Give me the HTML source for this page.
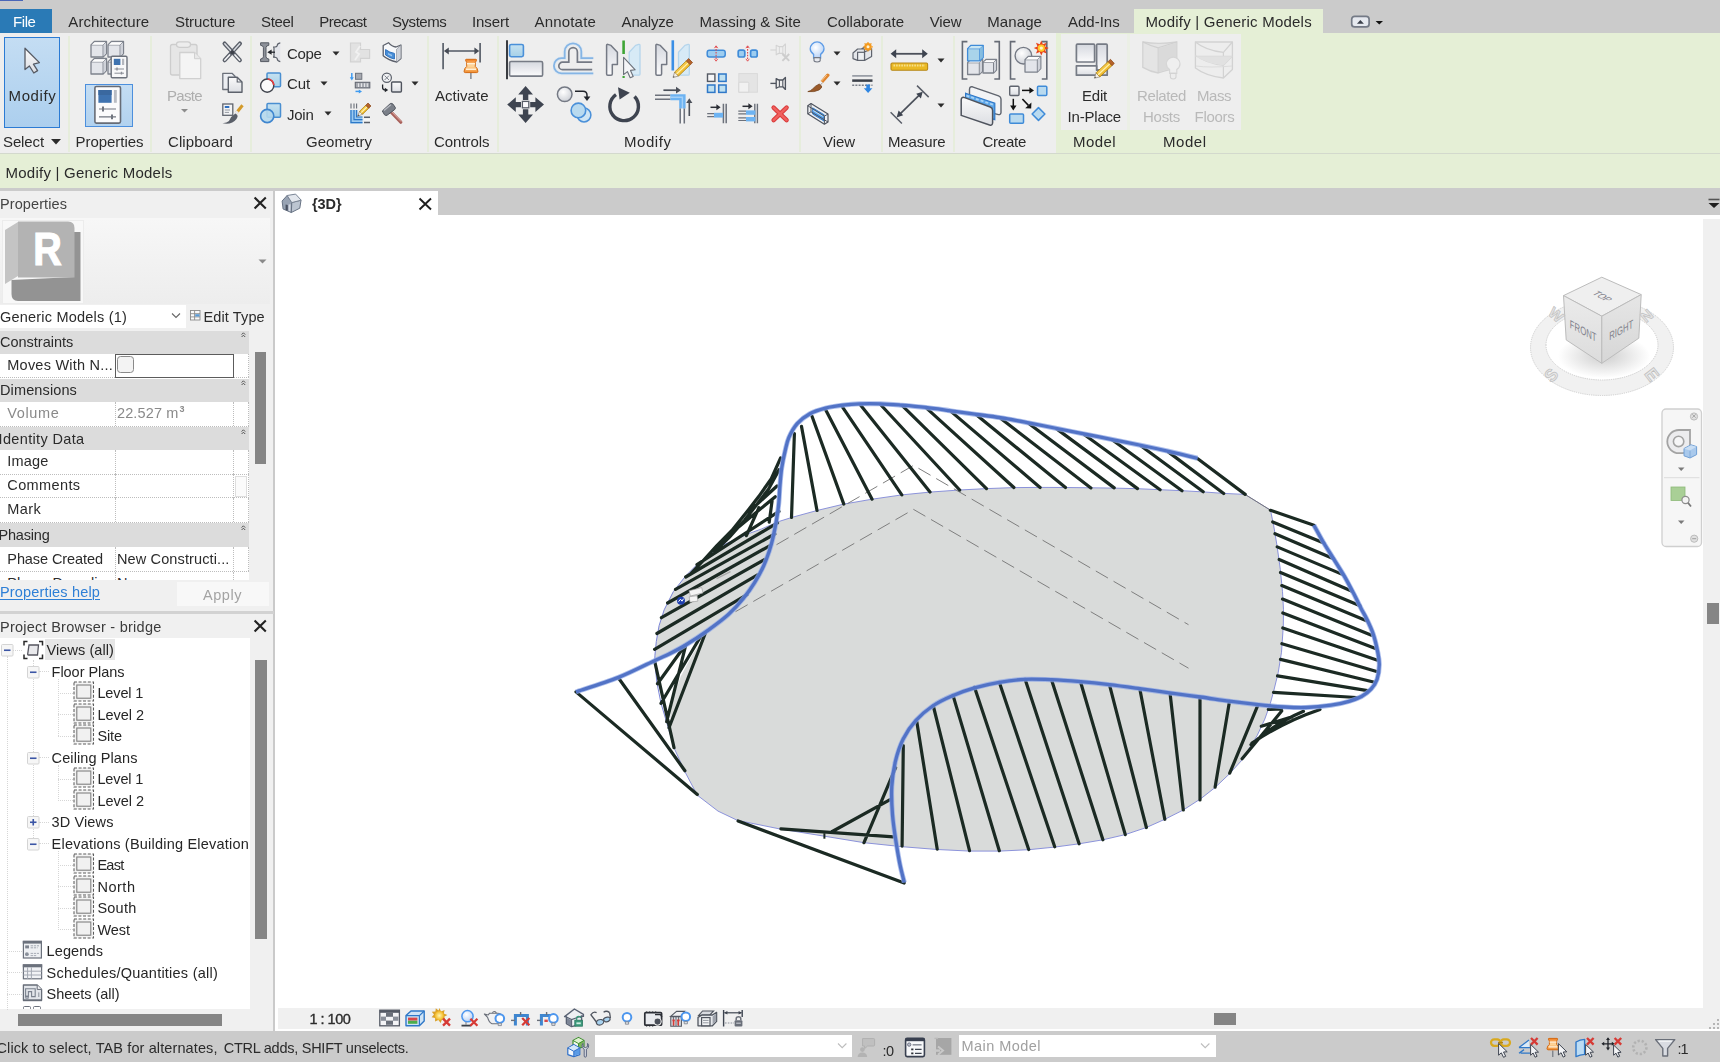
<!DOCTYPE html>
<html lang="en"><head><meta charset="utf-8"><title>Revit - bridge - 3D View: {3D}</title>
<style>
html,body{margin:0;padding:0;}
body{width:1720px;height:1062px;overflow:hidden;position:relative;background:#fff;
 font-family:"Liberation Sans",sans-serif;}
#app{position:absolute;left:0;top:0;width:1720px;height:1062px;overflow:hidden;}
#app div,#app span,#app svg{position:absolute;}
#app span{white-space:nowrap;line-height:20px;height:20px;}
#app span.g{filter:grayscale(1);}
#app span.c{filter:contrast(1);}
</style></head><body><div id="app">
<div style="left:0px;top:0px;width:1720px;height:33.4px;background:#cbcbcb;"></div>
<div style="left:0px;top:0px;width:23px;height:1px;background:#4a66b8;"></div>
<div style="left:0px;top:8.6px;width:52.4px;height:24.8px;background:#2a7ab6;"></div>
<span class="g" style="left:13.00px;top:12.10px;font-size:15px;color:#ffffff;letter-spacing:-0.418px;">File</span>
<div style="left:1133.6px;top:8.7px;width:189.4px;height:24.7px;background:#e5efd6;"></div>
<span class="g" style="left:68.30px;top:12.10px;font-size:15px;color:#2b2b2b;letter-spacing:0.080px;">Architecture</span>
<span class="g" style="left:175.00px;top:12.10px;font-size:15px;color:#2b2b2b;letter-spacing:-0.073px;">Structure</span>
<span class="g" style="left:261.00px;top:12.10px;font-size:15px;color:#2b2b2b;letter-spacing:-0.338px;">Steel</span>
<span class="g" style="left:319.30px;top:12.10px;font-size:15px;color:#2b2b2b;letter-spacing:-0.522px;">Precast</span>
<span class="g" style="left:392.00px;top:12.10px;font-size:15px;color:#2b2b2b;letter-spacing:-0.459px;">Systems</span>
<span class="g" style="left:472.00px;top:12.10px;font-size:15px;color:#2b2b2b;letter-spacing:-0.086px;">Insert</span>
<span class="g" style="left:534.50px;top:12.10px;font-size:15px;color:#2b2b2b;letter-spacing:0.181px;">Annotate</span>
<span class="g" style="left:621.60px;top:12.10px;font-size:15px;color:#2b2b2b;letter-spacing:-0.167px;">Analyze</span>
<span class="g" style="left:699.50px;top:12.10px;font-size:15px;color:#2b2b2b;letter-spacing:0.104px;">Massing &amp; Site</span>
<span class="g" style="left:827.00px;top:12.10px;font-size:15px;color:#2b2b2b;letter-spacing:0.026px;">Collaborate</span>
<span class="g" style="left:929.70px;top:12.10px;font-size:15px;color:#2b2b2b;letter-spacing:-0.086px;">View</span>
<span class="g" style="left:987.30px;top:12.10px;font-size:15px;color:#2b2b2b;letter-spacing:0.082px;">Manage</span>
<span class="g" style="left:1067.90px;top:12.10px;font-size:15px;color:#2b2b2b;letter-spacing:0.015px;">Add-Ins</span>
<span class="g" style="left:1145.40px;top:12.10px;font-size:15px;color:#2b2b2b;letter-spacing:0.219px;">Modify | Generic Models</span>
<svg style="left:1350px;top:15px" width="36" height="14" viewBox="0 0 36 14"><rect x="1.7" y="1.3" width="17.4" height="10.6" rx="3" fill="#e6e9ef" stroke="#747a86" stroke-width="1.7"/><path d="M6.9 8.8 L10.4 4.9 L13.9 8.8Z" fill="#3a3f4a"/><path d="M25.6 6 L33 6 L29.3 9.6Z" fill="#111"/></svg>
<div style="left:0px;top:33.4px;width:1720px;height:120.6px;background:#eeeeee;"></div>
<div style="left:1056px;top:33.4px;width:664px;height:120.6px;background:#e5efd6;"></div>
<div style="left:1061px;top:34px;width:180px;height:96px;background:#ebefe5;"></div>
<div style="left:1061px;top:34px;width:65.5px;height:96px;background:#eeeeee;"></div>
<div style="left:1130px;top:34px;width:111px;height:96px;background:#eeeeee;"></div>
<div style="left:67.5px;top:36px;width:2px;height:116px;background:#e6eddc;"></div>
<div style="left:149.5px;top:36px;width:2px;height:116px;background:#e6eddc;"></div>
<div style="left:249.5px;top:36px;width:2px;height:116px;background:#e6eddc;"></div>
<div style="left:426.5px;top:36px;width:2px;height:116px;background:#e6eddc;"></div>
<div style="left:496.5px;top:36px;width:2px;height:116px;background:#e6eddc;"></div>
<div style="left:798.5px;top:36px;width:2px;height:116px;background:#e6eddc;"></div>
<div style="left:880.5px;top:36px;width:2px;height:116px;background:#e6eddc;"></div>
<div style="left:952.5px;top:36px;width:2px;height:116px;background:#e6eddc;"></div>
<div style="left:0px;top:153px;width:1720px;height:1px;background:#d3d9cd;"></div>
<div style="left:0px;top:154px;width:1720px;height:34px;background:#e5efd6;"></div>
<span class="g" style="left:5.50px;top:162.70px;font-size:15px;color:#2b2b2b;letter-spacing:0.241px;">Modify | Generic Models</span>
<div style="left:0px;top:188px;width:1720px;height:27.3px;background:#cbcbcb;"></div>
<div style="left:4px;top:37px;width:56px;height:91px;background:linear-gradient(#c4ddf3,#accfee);border:1.5px solid #2b7bd4;box-sizing:border-box;"></div>
<span class="g" style="left:8.50px;top:86.40px;font-size:15px;color:#2b2b2b;letter-spacing:0.637px;">Modify</span>
<div style="left:85px;top:83.7px;width:48px;height:43.3px;background:linear-gradient(#c4ddf3,#b2d2ef);border:1.5px solid #4c8fdd;box-sizing:border-box;"></div>
<span class="g" style="left:3.00px;top:132.00px;font-size:15px;color:#2b2b2b;letter-spacing:-0.115px;">Select</span>
<svg style="left:50px;top:138px" width="12" height="8"><path d="M1 1 L11 1 L6 6.5Z" fill="#2b2b2b"/></svg>
<span class="g" style="left:75.50px;top:132.00px;font-size:15px;color:#2b2b2b;letter-spacing:-0.037px;">Properties</span>
<span class="g" style="left:168.00px;top:132.00px;font-size:15px;color:#2b2b2b;letter-spacing:0.088px;">Clipboard</span>
<span class="g" style="left:306.00px;top:132.00px;font-size:15px;color:#2b2b2b;letter-spacing:0.018px;">Geometry</span>
<span class="g" style="left:434.00px;top:132.00px;font-size:15px;color:#2b2b2b;letter-spacing:-0.045px;">Controls</span>
<span class="g" style="left:624.00px;top:132.00px;font-size:15px;color:#2b2b2b;letter-spacing:0.553px;">Modify</span>
<span class="g" style="left:823.00px;top:132.00px;font-size:15px;color:#2b2b2b;letter-spacing:-0.061px;">View</span>
<span class="g" style="left:888.00px;top:132.00px;font-size:15px;color:#2b2b2b;letter-spacing:-0.123px;">Measure</span>
<span class="g" style="left:982.50px;top:132.00px;font-size:15px;color:#2b2b2b;letter-spacing:-0.254px;">Create</span>
<span class="g" style="left:1073.00px;top:132.00px;font-size:15px;color:#2b2b2b;letter-spacing:0.429px;">Model</span>
<span class="g" style="left:1163.00px;top:132.00px;font-size:15px;color:#2b2b2b;letter-spacing:0.529px;">Model</span>
<span class="g" style="left:167.00px;top:86.40px;font-size:15px;color:#aeaeae;letter-spacing:-0.672px;">Paste</span>
<svg style="left:180px;top:108px" width="10" height="6"><path d="M1 1 L8 1 L4.5 4.5Z" fill="#8c8c8c"/></svg>
<span class="g" style="left:287.00px;top:44.10px;font-size:15px;color:#2b2b2b;letter-spacing:-0.315px;">Cope</span>
<span class="g" style="left:287.00px;top:74.40px;font-size:15px;color:#2b2b2b;letter-spacing:-0.114px;">Cut</span>
<span class="g" style="left:287.00px;top:104.60px;font-size:15px;color:#2b2b2b;letter-spacing:-0.254px;">Join</span>
<svg style="left:332px;top:51px" width="9" height="6"><path d="M0.5 0.5 L7.5 0.5 L4 4.5Z" fill="#2b2b2b"/></svg>
<svg style="left:320px;top:81px" width="9" height="6"><path d="M0.5 0.5 L7.5 0.5 L4 4.5Z" fill="#2b2b2b"/></svg>
<svg style="left:323.5px;top:111px" width="9" height="6"><path d="M0.5 0.5 L7.5 0.5 L4 4.5Z" fill="#2b2b2b"/></svg>
<svg style="left:411px;top:81px" width="9" height="6"><path d="M0.5 0.5 L7.5 0.5 L4 4.5Z" fill="#2b2b2b"/></svg>
<svg style="left:832.5px;top:50.5px" width="9" height="6"><path d="M0.5 0.5 L7.5 0.5 L4 4.5Z" fill="#2b2b2b"/></svg>
<svg style="left:832.5px;top:80.5px" width="9" height="6"><path d="M0.5 0.5 L7.5 0.5 L4 4.5Z" fill="#2b2b2b"/></svg>
<svg style="left:937px;top:57.5px" width="9" height="6"><path d="M0.5 0.5 L7.5 0.5 L4 4.5Z" fill="#2b2b2b"/></svg>
<svg style="left:937px;top:103px" width="9" height="6"><path d="M0.5 0.5 L7.5 0.5 L4 4.5Z" fill="#2b2b2b"/></svg>
<span class="g" style="left:435.00px;top:86.40px;font-size:15px;color:#2b2b2b;letter-spacing:0.018px;">Activate</span>
<span class="g" style="left:1082.00px;top:86.40px;font-size:15px;color:#2b2b2b;letter-spacing:-0.212px;">Edit</span>
<span class="g" style="left:1067.50px;top:107.30px;font-size:15px;color:#2b2b2b;letter-spacing:-0.191px;">In-Place</span>
<span class="g" style="left:1137.00px;top:86.40px;font-size:15px;color:#b9b9b9;letter-spacing:-0.386px;">Related</span>
<span class="g" style="left:1143.00px;top:107.30px;font-size:15px;color:#b9b9b9;letter-spacing:-0.269px;">Hosts</span>
<span class="g" style="left:1197.00px;top:86.40px;font-size:15px;color:#b9b9b9;letter-spacing:-0.460px;">Mass</span>
<span class="g" style="left:1194.50px;top:107.30px;font-size:15px;color:#b9b9b9;letter-spacing:-0.279px;">Floors</span>
<div style="left:0px;top:190.6px;width:273px;height:840.7px;background:#f0f0f0;"></div>
<div style="left:273px;top:190.6px;width:2.1px;height:840.7px;background:#cacaca;"></div>
<div style="left:275.1px;top:190.6px;width:2.6px;height:840.7px;background:#ffffff;"></div>
<span class="g" style="left:0.00px;top:194.38px;font-size:14.5px;color:#444;letter-spacing:0.091px;">Properties</span>
<svg style="left:253px;top:196px" width="15" height="14"><path d="M1.6 1.6 L12.8 12.4 M12.8 1.6 L1.6 12.4" stroke="#222" stroke-width="2.1" fill="none"/></svg>
<div style="left:0;top:217.5px;width:270px;height:86px;background:linear-gradient(#f7f7f7,#ededed);"></div>
<div style="left:1.5px;top:220px;width:82.5px;height:83.5px;background:#f8f8f8;border:1px solid #ececec;box-sizing:border-box;"></div>
<svg style="left:4px;top:220px" width="80" height="83" viewBox="0 0 80 83"><path d="M1 10 L14 2 L14 56 L1 64Z" fill="#c4c4c4"/><path d="M70 12 L76.5 12 L76.5 81 L14 81 Q7.5 81 7.5 74 L7.5 60 L70 57Z" fill="#939393"/><path d="M14 1.5 L64 1.5 Q70.5 1.5 70.5 8 L70.5 57.5 L14 57.5Z" fill="#b3b3b3"/><text x="0" y="0" transform="translate(29.2 45.2) scale(0.86 1)" font-family="Liberation Sans, sans-serif" font-weight="700" font-size="46" fill="#ffffff" stroke="#ffffff" stroke-width="1.2">R</text></svg>
<svg style="left:258px;top:259px" width="10" height="6"><path d="M0.5 0.5 L8.5 0.5 L4.5 4.5Z" fill="#8a8a8a"/></svg>
<div style="left:0px;top:304.5px;width:185.5px;height:23.5px;background:#ffffff;"></div>
<span class="g" style="left:0.00px;top:307.38px;font-size:14.5px;color:#2b2b2b;letter-spacing:0.206px;">Generic Models (1)</span>
<svg style="left:171px;top:312px" width="10" height="8"><path d="M1 1.5 L5 5.5 L9 1.5" stroke="#666" stroke-width="1.1" fill="none"/></svg>
<svg style="left:189.5px;top:309.5px" width="11" height="11"><rect x=".5" y=".5" width="9.5" height="9.5" fill="#fafafa" stroke="#8a8a8a" stroke-width=".9"/><path d="M.5 3.7 H10 M.5 6.9 H10 M4.6 .5 V10" stroke="#8a8a8a" stroke-width=".9"/><rect x="5.2" y="4.2" width="4.4" height="2.3" fill="#5b9bd5"/></svg>
<span class="g" style="left:203.50px;top:306.98px;font-size:14.5px;color:#2b2b2b;letter-spacing:0.123px;">Edit Type</span>
<div style="left:0px;top:330.5px;width:248.5px;height:249px;background:#ffffff;"></div>
<div style="left:0px;top:330.5px;width:248.5px;height:23px;background:#dcdcdc;"></div>
<span class="g" style="left:0.00px;top:332.48px;font-size:14.5px;color:#2b2b2b;letter-spacing:-0.003px;">Constraints</span>
<svg style="left:240.5px;top:332.0px" width="5" height="6"><path d="M.6 2.6 L2.4 .8 L4.2 2.6 M.6 5 L2.4 3.2 L4.2 5" stroke="#444" stroke-width=".9" fill="none"/></svg>
<div style="left:0px;top:378.5px;width:248.5px;height:23px;background:#dcdcdc;"></div>
<span class="g" style="left:0.00px;top:380.38px;font-size:14.5px;color:#2b2b2b;letter-spacing:0.125px;">Dimensions</span>
<svg style="left:240.5px;top:380.0px" width="5" height="6"><path d="M.6 2.6 L2.4 .8 L4.2 2.6 M.6 5 L2.4 3.2 L4.2 5" stroke="#444" stroke-width=".9" fill="none"/></svg>
<div style="left:0px;top:427.3px;width:248.5px;height:22.5px;background:#dcdcdc;"></div>
<span class="g" style="left:-1.50px;top:428.58px;font-size:14.5px;color:#2b2b2b;letter-spacing:0.353px;">Identity Data</span>
<svg style="left:240.5px;top:428.8px" width="5" height="6"><path d="M.6 2.6 L2.4 .8 L4.2 2.6 M.6 5 L2.4 3.2 L4.2 5" stroke="#444" stroke-width=".9" fill="none"/></svg>
<div style="left:0px;top:523px;width:248.5px;height:23.5px;background:#dcdcdc;"></div>
<span class="g" style="left:-1.50px;top:525.38px;font-size:14.5px;color:#2b2b2b;letter-spacing:-0.200px;">Phasing</span>
<svg style="left:240.5px;top:524.5px" width="5" height="6"><path d="M.6 2.6 L2.4 .8 L4.2 2.6 M.6 5 L2.4 3.2 L4.2 5" stroke="#444" stroke-width=".9" fill="none"/></svg>
<div style="left:0;top:376.9px;width:248.5px;height:0;border-top:1px dotted #bdbdbd;"></div>
<div style="left:115px;top:353.5px;width:0;height:23.899999999999977px;border-left:1px dotted #bdbdbd;"></div>
<div style="left:233px;top:353.5px;width:0;height:23.899999999999977px;border-left:1px dotted #bdbdbd;"></div>
<div style="left:247.5px;top:353.5px;width:0;height:23.899999999999977px;border-left:1px dotted #bdbdbd;"></div>
<div style="left:0;top:425.8px;width:248.5px;height:0;border-top:1px dotted #bdbdbd;"></div>
<div style="left:115px;top:401.5px;width:0;height:24.80000000000001px;border-left:1px dotted #bdbdbd;"></div>
<div style="left:233px;top:401.5px;width:0;height:24.80000000000001px;border-left:1px dotted #bdbdbd;"></div>
<div style="left:247.5px;top:401.5px;width:0;height:24.80000000000001px;border-left:1px dotted #bdbdbd;"></div>
<div style="left:0;top:473.5px;width:248.5px;height:0;border-top:1px dotted #bdbdbd;"></div>
<div style="left:115px;top:449.8px;width:0;height:24.19999999999999px;border-left:1px dotted #bdbdbd;"></div>
<div style="left:233px;top:449.8px;width:0;height:24.19999999999999px;border-left:1px dotted #bdbdbd;"></div>
<div style="left:247.5px;top:449.8px;width:0;height:24.19999999999999px;border-left:1px dotted #bdbdbd;"></div>
<div style="left:0;top:497.1px;width:248.5px;height:0;border-top:1px dotted #bdbdbd;"></div>
<div style="left:115px;top:474px;width:0;height:23.600000000000023px;border-left:1px dotted #bdbdbd;"></div>
<div style="left:233px;top:474px;width:0;height:23.600000000000023px;border-left:1px dotted #bdbdbd;"></div>
<div style="left:247.5px;top:474px;width:0;height:23.600000000000023px;border-left:1px dotted #bdbdbd;"></div>
<div style="left:0;top:521.5px;width:248.5px;height:0;border-top:1px dotted #bdbdbd;"></div>
<div style="left:115px;top:497.6px;width:0;height:24.399999999999977px;border-left:1px dotted #bdbdbd;"></div>
<div style="left:233px;top:497.6px;width:0;height:24.399999999999977px;border-left:1px dotted #bdbdbd;"></div>
<div style="left:247.5px;top:497.6px;width:0;height:24.399999999999977px;border-left:1px dotted #bdbdbd;"></div>
<div style="left:0;top:570.8px;width:248.5px;height:0;border-top:1px dotted #bdbdbd;"></div>
<div style="left:115px;top:546.5px;width:0;height:24.799999999999955px;border-left:1px dotted #bdbdbd;"></div>
<div style="left:233px;top:546.5px;width:0;height:24.799999999999955px;border-left:1px dotted #bdbdbd;"></div>
<div style="left:247.5px;top:546.5px;width:0;height:24.799999999999955px;border-left:1px dotted #bdbdbd;"></div>
<span class="g" style="left:7.30px;top:354.78px;font-size:14.5px;color:#2b2b2b;letter-spacing:0.225px;">Moves With N...</span>
<div style="left:115px;top:354px;width:118.5px;height:23.5px;background:#ffffff;border:1px solid #5c5c5c;box-sizing:border-box;"></div>
<div style="left:117px;top:356px;width:16.5px;height:16.5px;background:#f3f3f3;border:1.3px solid #8a8a8a;border-radius:3.5px;box-sizing:border-box;"></div>
<span class="g" style="left:7.30px;top:403.18px;font-size:14.5px;color:#8a8a8a;letter-spacing:0.639px;">Volume</span>
<span class="g" style="left:117.00px;top:403.18px;font-size:14.5px;color:#8a8a8a;letter-spacing:0.118px;">22.527 m</span>
<span class="g" style="left:179.60px;top:399.48px;font-size:9px;color:#8a8a8a;font-weight:700;">3</span>
<span class="g" style="left:7.30px;top:451.38px;font-size:14.5px;color:#2b2b2b;letter-spacing:0.180px;">Image</span>
<span class="g" style="left:7.30px;top:475.38px;font-size:14.5px;color:#2b2b2b;letter-spacing:0.387px;">Comments</span>
<div style="left:234.5px;top:475.5px;width:12.5px;height:21px;background:#fbfbfb;border:1px solid #dedede;box-sizing:border-box;"></div>
<span class="g" style="left:7.30px;top:499.18px;font-size:14.5px;color:#2b2b2b;letter-spacing:0.369px;">Mark</span>
<span class="g" style="left:7.30px;top:548.58px;font-size:14.5px;color:#2b2b2b;letter-spacing:-0.079px;">Phase Created</span>
<span class="g" style="left:117.00px;top:548.58px;font-size:14.5px;color:#2b2b2b;letter-spacing:0.124px;">New Constructi...</span>
<div style="left:0;top:571.5px;width:248px;height:8px;overflow:hidden;"><span style="left:7.3px;top:1.5px;font-size:14.5px;color:#2b2b2b;">Phase Demoli...</span><span style="left:117px;top:1.5px;font-size:14.5px;color:#2b2b2b;">None</span><div style="left:115px;top:0;width:0;height:8px;border-left:1px dotted #bdbdbd;"></div><div style="left:233px;top:0;width:0;height:8px;border-left:1px dotted #bdbdbd;"></div><div style="left:247.5px;top:0;width:0;height:8px;border-left:1px dotted #bdbdbd;"></div></div>
<div style="left:254.5px;top:351.5px;width:11.8px;height:112px;background:#858585;"></div>
<span class="c" style="left:0.00px;top:581.68px;font-size:14.5px;color:#2e7fd6;letter-spacing:0.165px;text-decoration:underline;text-decoration-thickness:1px;text-underline-offset:2px;">Properties help</span>
<div style="left:176.5px;top:581.5px;width:92px;height:24.5px;background:#f8f8f8;"></div>
<span class="g" style="left:203.00px;top:584.68px;font-size:14.5px;color:#a3a3a3;letter-spacing:0.545px;">Apply</span>
<div style="left:0px;top:610.8px;width:273.5px;height:2.8px;background:#d2d2d2;"></div>
<span class="g" style="left:0.00px;top:616.68px;font-size:14.5px;color:#3c3c3c;letter-spacing:0.249px;">Project Browser - bridge</span>
<svg style="left:253px;top:619px" width="15" height="14"><path d="M1.6 1.6 L12.8 12.4 M12.8 1.6 L1.6 12.4" stroke="#222" stroke-width="2.1" fill="none"/></svg>
<div style="left:0px;top:638.3px;width:249.8px;height:370.4px;background:#ffffff;"></div>
<div style="left:45.3px;top:638.8px;width:70px;height:20.8px;background:#e6e6e6;"></div>
<div style="left:7px;top:656px;width:0;height:354px;border-left:1px dotted #d6d6d6;"></div>
<div style="left:32.5px;top:660px;width:0;height:184px;border-left:1px dotted #d6d6d6;"></div>
<div style="left:13px;top:649.7px;width:9px;height:0;border-top:1px dotted #d6d6d6;"></div>
<div style="left:39px;top:671.2px;width:10px;height:0;border-top:1px dotted #d6d6d6;"></div>
<div style="left:39px;top:757.2px;width:10px;height:0;border-top:1px dotted #d6d6d6;"></div>
<div style="left:39px;top:821.7px;width:10px;height:0;border-top:1px dotted #d6d6d6;"></div>
<div style="left:39px;top:843.2px;width:10px;height:0;border-top:1px dotted #d6d6d6;"></div>
<div style="left:58px;top:678.7px;width:0;height:57.5px;border-left:1px dotted #d6d6d6;"></div>
<div style="left:58px;top:692.7px;width:15px;height:0;border-top:1px dotted #d6d6d6;"></div>
<div style="left:58px;top:714.2px;width:15px;height:0;border-top:1px dotted #d6d6d6;"></div>
<div style="left:58px;top:735.7px;width:15px;height:0;border-top:1px dotted #d6d6d6;"></div>
<div style="left:58px;top:764.7px;width:0;height:36.0px;border-left:1px dotted #d6d6d6;"></div>
<div style="left:58px;top:778.7px;width:15px;height:0;border-top:1px dotted #d6d6d6;"></div>
<div style="left:58px;top:800.2px;width:15px;height:0;border-top:1px dotted #d6d6d6;"></div>
<div style="left:58px;top:850.7px;width:0;height:79.0px;border-left:1px dotted #d6d6d6;"></div>
<div style="left:58px;top:864.7px;width:15px;height:0;border-top:1px dotted #d6d6d6;"></div>
<div style="left:58px;top:886.2px;width:15px;height:0;border-top:1px dotted #d6d6d6;"></div>
<div style="left:58px;top:907.7px;width:15px;height:0;border-top:1px dotted #d6d6d6;"></div>
<div style="left:58px;top:929.2px;width:15px;height:0;border-top:1px dotted #d6d6d6;"></div>
<div style="left:7px;top:950.7px;width:15px;height:0;border-top:1px dotted #d6d6d6;"></div>
<div style="left:7px;top:972.2px;width:15px;height:0;border-top:1px dotted #d6d6d6;"></div>
<div style="left:7px;top:993.7px;width:15px;height:0;border-top:1px dotted #d6d6d6;"></div>
<svg style="left:1px;top:644.2px" width="13" height="13"><rect x=".5" y=".5" width="11.5" height="11.5" rx="1" fill="#f6f6f6" stroke="#d4d4d4"/><path d="M3 6.25 H9.5" stroke="#3b55a5" stroke-width="1.6"/></svg>
<svg style="left:26.5px;top:665.7px" width="13" height="13"><rect x=".5" y=".5" width="11.5" height="11.5" rx="1" fill="#f6f6f6" stroke="#d4d4d4"/><path d="M3 6.25 H9.5" stroke="#3b55a5" stroke-width="1.6"/></svg>
<svg style="left:26.5px;top:751.7px" width="13" height="13"><rect x=".5" y=".5" width="11.5" height="11.5" rx="1" fill="#f6f6f6" stroke="#d4d4d4"/><path d="M3 6.25 H9.5" stroke="#3b55a5" stroke-width="1.6"/></svg>
<svg style="left:26.5px;top:816.2px" width="13" height="13"><rect x=".5" y=".5" width="11.5" height="11.5" rx="1" fill="#f6f6f6" stroke="#d4d4d4"/><path d="M3 6.25 H9.5" stroke="#3b55a5" stroke-width="1.6"/><path d="M6.25 3 V9.5" stroke="#3b55a5" stroke-width="1.6"/></svg>
<svg style="left:26.5px;top:837.7px" width="13" height="13"><rect x=".5" y=".5" width="11.5" height="11.5" rx="1" fill="#f6f6f6" stroke="#d4d4d4"/><path d="M3 6.25 H9.5" stroke="#3b55a5" stroke-width="1.6"/></svg>
<svg style="left:22.5px;top:640.0px" width="21" height="20" viewBox="0 0 21 20"><path d="M1 5.5 V1.5 H4.5 M16 1.5 H19.5 V5.5 M19.5 14.5 V18.5 H16 M4.5 18.5 H1 V14.5" fill="none" stroke="#2a2a2a" stroke-width="1.5"/><path d="M6 5 H15.5 L14.5 15 H5.5 Q4.6 15 4.7 14Z" fill="#e9e9ec" stroke="#55555f" stroke-width="1.3"/></svg>
<span class="g" style="left:46.60px;top:640.38px;font-size:14.5px;color:#262626;letter-spacing:0.072px;">Views (all)</span>
<span class="g" style="left:51.60px;top:661.88px;font-size:14.5px;color:#262626;letter-spacing:-0.040px;">Floor Plans</span>
<span class="g" style="left:97.40px;top:683.38px;font-size:14.5px;color:#262626;letter-spacing:-0.123px;">Level 1</span>
<span class="g" style="left:97.40px;top:704.88px;font-size:14.5px;color:#262626;letter-spacing:-0.023px;">Level 2</span>
<span class="g" style="left:97.40px;top:726.38px;font-size:14.5px;color:#262626;letter-spacing:-0.097px;">Site</span>
<span class="g" style="left:51.60px;top:747.88px;font-size:14.5px;color:#262626;letter-spacing:0.098px;">Ceiling Plans</span>
<span class="g" style="left:97.40px;top:769.38px;font-size:14.5px;color:#262626;letter-spacing:-0.123px;">Level 1</span>
<span class="g" style="left:97.40px;top:790.88px;font-size:14.5px;color:#262626;letter-spacing:-0.023px;">Level 2</span>
<span class="g" style="left:51.60px;top:812.38px;font-size:14.5px;color:#262626;letter-spacing:0.115px;">3D Views</span>
<span class="g" style="left:51.60px;top:833.88px;font-size:14.5px;color:#262626;letter-spacing:0.212px;">Elevations (Building Elevation</span>
<span class="g" style="left:97.40px;top:855.38px;font-size:14.5px;color:#262626;letter-spacing:-0.729px;">East</span>
<span class="g" style="left:97.40px;top:876.88px;font-size:14.5px;color:#262626;letter-spacing:0.528px;">North</span>
<span class="g" style="left:97.40px;top:898.38px;font-size:14.5px;color:#262626;letter-spacing:0.241px;">South</span>
<span class="g" style="left:97.40px;top:919.88px;font-size:14.5px;color:#262626;letter-spacing:-0.042px;">West</span>
<span class="g" style="left:46.60px;top:941.38px;font-size:14.5px;color:#262626;letter-spacing:0.109px;">Legends</span>
<span class="g" style="left:46.60px;top:962.88px;font-size:14.5px;color:#262626;letter-spacing:0.237px;">Schedules/Quantities (all)</span>
<span class="g" style="left:46.60px;top:984.38px;font-size:14.5px;color:#262626;letter-spacing:-0.037px;">Sheets (all)</span>
<svg style="left:72.5px;top:681.4000000000001px" width="22" height="21" viewBox="0 0 22 21"><rect x="1" y="1" width="19.5" height="19" fill="#f4f4f4" stroke="#5c5c5c" stroke-width="1.05" stroke-dasharray="3 1.6"/><rect x="3.8" y="4" width="14" height="13.2" fill="#f1f1f1" stroke="#808080" stroke-width="1.1"/></svg>
<svg style="left:72.5px;top:702.9000000000001px" width="22" height="21" viewBox="0 0 22 21"><rect x="1" y="1" width="19.5" height="19" fill="#f4f4f4" stroke="#5c5c5c" stroke-width="1.05" stroke-dasharray="3 1.6"/><rect x="3.8" y="4" width="14" height="13.2" fill="#f1f1f1" stroke="#808080" stroke-width="1.1"/></svg>
<svg style="left:72.5px;top:724.4000000000001px" width="22" height="21" viewBox="0 0 22 21"><rect x="1" y="1" width="19.5" height="19" fill="#f4f4f4" stroke="#5c5c5c" stroke-width="1.05" stroke-dasharray="3 1.6"/><rect x="3.8" y="4" width="14" height="13.2" fill="#f1f1f1" stroke="#808080" stroke-width="1.1"/></svg>
<svg style="left:72.5px;top:767.4000000000001px" width="22" height="21" viewBox="0 0 22 21"><rect x="1" y="1" width="19.5" height="19" fill="#f4f4f4" stroke="#5c5c5c" stroke-width="1.05" stroke-dasharray="3 1.6"/><rect x="3.8" y="4" width="14" height="13.2" fill="#f1f1f1" stroke="#808080" stroke-width="1.1"/></svg>
<svg style="left:72.5px;top:788.9000000000001px" width="22" height="21" viewBox="0 0 22 21"><rect x="1" y="1" width="19.5" height="19" fill="#f4f4f4" stroke="#5c5c5c" stroke-width="1.05" stroke-dasharray="3 1.6"/><rect x="3.8" y="4" width="14" height="13.2" fill="#f1f1f1" stroke="#808080" stroke-width="1.1"/></svg>
<svg style="left:72.5px;top:853.4000000000001px" width="22" height="21" viewBox="0 0 22 21"><rect x="1" y="1" width="19.5" height="19" fill="#f4f4f4" stroke="#5c5c5c" stroke-width="1.05" stroke-dasharray="3 1.6"/><rect x="3.8" y="4" width="14" height="13.2" fill="#f1f1f1" stroke="#808080" stroke-width="1.1"/></svg>
<svg style="left:72.5px;top:874.9000000000001px" width="22" height="21" viewBox="0 0 22 21"><rect x="1" y="1" width="19.5" height="19" fill="#f4f4f4" stroke="#5c5c5c" stroke-width="1.05" stroke-dasharray="3 1.6"/><rect x="3.8" y="4" width="14" height="13.2" fill="#f1f1f1" stroke="#808080" stroke-width="1.1"/></svg>
<svg style="left:72.5px;top:896.4000000000001px" width="22" height="21" viewBox="0 0 22 21"><rect x="1" y="1" width="19.5" height="19" fill="#f4f4f4" stroke="#5c5c5c" stroke-width="1.05" stroke-dasharray="3 1.6"/><rect x="3.8" y="4" width="14" height="13.2" fill="#f1f1f1" stroke="#808080" stroke-width="1.1"/></svg>
<svg style="left:72.5px;top:917.9000000000001px" width="22" height="21" viewBox="0 0 22 21"><rect x="1" y="1" width="19.5" height="19" fill="#f4f4f4" stroke="#5c5c5c" stroke-width="1.05" stroke-dasharray="3 1.6"/><rect x="3.8" y="4" width="14" height="13.2" fill="#f1f1f1" stroke="#808080" stroke-width="1.1"/></svg>
<svg style="left:22px;top:940px" width="21" height="20" viewBox="22 940 21 20"><rect x="23.4" y="941.4" width="18" height="16.6" fill="#eef0f3" stroke="#6b717c" stroke-width="1.2"/><rect x="22.8" y="940.8" width="19.2" height="2.8" fill="#6b717c"/><rect x="25.2" y="945.4" width="3.8" height="3" fill="#7d838e"/><path d="M30.6 945.8 H39 M30.6 947.8 H37.6" stroke="#a2a7b1" stroke-width="1" stroke-dasharray="2.4 .8"/><circle cx="26.9" cy="954.2" r="1.9" fill="#8a909b"/><path d="M30.6 953.4 H39 M30.6 955.6 H37" stroke="#a7acb6" stroke-width="1" stroke-dasharray="2.4 .8"/></svg>
<svg style="left:22px;top:963px" width="21" height="18" viewBox="22 963 21 18"><rect x="23.4" y="964.9" width="18.2" height="13.9" fill="#f1f2f5" stroke="#6b717c" stroke-width="1.2"/><rect x="22.8" y="964.3" width="19.4" height="3" fill="#6b717c"/><path d="M23.4 971.2 H41.6 M23.4 975 H41.6 M27.6 967.3 V978.8 M31.4 967.3 V978.8" stroke="#a4a9b3" stroke-width="1"/></svg>
<svg style="left:22px;top:983px" width="21" height="19" viewBox="22 983 21 19"><path d="M23.4 985 H37.2 L41.6 989.4 V1000.2 H23.4Z" fill="#e2e5ea" stroke="#666c77" stroke-width="1.3" stroke-linejoin="round"/><path d="M37.2 985 V989.4 H41.6" fill="#f4f5f7" stroke="#666c77" stroke-width="1"/><path d="M25.6 996.6 V988.8 H35.2 V996.6 H31.6 V991.6 H28.4 V996.6Z" fill="none" stroke="#7b828e" stroke-width="1.1"/><rect x="25.8" y="996" width="2.4" height="2.2" fill="none" stroke="#7b828e" stroke-width=".9"/><path d="M38.8 992.4 V997" stroke="#8a909b" stroke-width="1"/><path d="M23 1000.4 H42" stroke="#666c77" stroke-width="1.6"/></svg>
<div style="left:22px;top:1005.8px;width:21px;height:2.9px;overflow:hidden;"><div style="left:1px;top:0;width:8px;height:4px;border:1.3px solid #6b717c;border-radius:1.5px;box-sizing:border-box;"></div><div style="left:11px;top:0;width:8px;height:4px;border:1.3px solid #6b717c;border-radius:1.5px;box-sizing:border-box;"></div></div>
<div style="left:254.8px;top:660.2px;width:11.8px;height:278.5px;background:#858585;"></div>
<div style="left:18.3px;top:1013.5px;width:203.7px;height:12px;background:#858585;"></div>
<div style="left:275.1px;top:190.6px;width:162.6px;height:25px;background:#ffffff;"></div>
<div style="left:275.1px;top:215.3px;width:1427.9px;height:792.5px;background:#ffffff;"></div>
<span class="g" style="left:312.00px;top:194.38px;font-size:14.5px;color:#2b2b2b;letter-spacing:-0.055px;font-weight:700;">{3D}</span>
<svg style="left:417.5px;top:196.5px" width="15" height="15"><path d="M1.5 1.5 L13 12.5 M13 1.5 L1.5 12.5" stroke="#1e1e1e" stroke-width="1.9" fill="none"/></svg>
<svg style="left:280px;top:192px" width="23" height="22" viewBox="280 192 23 22"><path d="M282.1 201 L287.1 195.5 L291.8 202.4 L291.3 212.5 L283.1 209Z" fill="#98a3b3" stroke="#687384" stroke-width="1" stroke-linejoin="round"/><path d="M291.8 202.4 L301 200.2 L299.8 208.2 L291.3 212.5Z" fill="#bcc5d1" stroke="#687384" stroke-width="1" stroke-linejoin="round"/><path d="M287.1 195.5 L295.6 194.1 L301.2 200.2 L291.8 202.6Z" fill="#e3e7ed" stroke="#7a8595" stroke-width="1" stroke-linejoin="round"/><path d="M285.6 204.4 L287.8 205 L287.8 210.8 L285.6 209.9Z" fill="#474f5f"/><path d="M288.6 204.6 L290.6 204.2 L290.4 211.4 L288.6 210.8Z" fill="#d5dae3"/></svg>
<svg style="left:1708px;top:198px" width="12" height="11"><path d="M.5 1.5 H11.5" stroke="#555" stroke-width="1.6"/><path d="M.5 5 L11.5 5 L6 10Z" fill="#1e1e1e"/></svg>
<div style="left:1703px;top:218.5px;width:17px;height:810.5px;background:#f0f0f0;"></div>
<div style="left:1707.2px;top:603px;width:11.8px;height:21px;background:#858585;"></div>
<div style="left:277.7px;top:1007.7px;width:1442.3px;height:21.3px;background:#f0f0f0;"></div>
<div style="left:275.1px;top:1029px;width:1444.9px;height:2.4px;background:#ffffff;"></div>
<span class="g" style="left:309.60px;top:1008.98px;font-size:14.5px;color:#2b2b2b;letter-spacing:-0.535px;-webkit-text-stroke:0.35px #2b2b2b;">1 : 100</span>
<div style="left:1214.3px;top:1013px;width:21.5px;height:11.5px;background:#858585;"></div>
<svg style="left:1708px;top:1018px" width="12" height="12"><g fill="#b5b5b5"><rect x="9" y="1" width="2" height="2"/><rect x="9" y="5" width="2" height="2"/><rect x="5" y="5" width="2" height="2"/><rect x="9" y="9" width="2" height="2"/><rect x="5" y="9" width="2" height="2"/><rect x="1" y="9" width="2" height="2"/></g></svg>
<div style="left:0px;top:1031.3px;width:1720px;height:30.7px;background:#cbcbcb;"></div>
<span class="g" style="left:-3.50px;top:1038.28px;font-size:14.5px;color:#2b2b2b;letter-spacing:0.112px;">Click to select, TAB for alternates,</span>
<span class="g" style="left:223.70px;top:1038.28px;font-size:14.5px;color:#2b2b2b;letter-spacing:-0.255px;">CTRL adds, SHIFT unselects.</span>
<div style="left:594.7px;top:1034.6px;width:257px;height:22px;background:#ffffff;"></div>
<svg style="left:837px;top:1041.5px" width="11" height="8"><path d="M1 1.5 L5.2 5.7 L9.4 1.5" stroke="#bdbdbd" stroke-width="1.1" fill="none"/></svg>
<span class="g" style="left:882.60px;top:1040.58px;font-size:14.5px;color:#2b2b2b;letter-spacing:-0.546px;">:0</span>
<div style="left:958.5px;top:1034.6px;width:257.3px;height:22px;background:#ffffff;"></div>
<span class="g" style="left:961.50px;top:1036.48px;font-size:14.5px;color:#a0a0a0;letter-spacing:0.455px;">Main Model</span>
<svg style="left:1200px;top:1041.5px" width="11" height="8"><path d="M1 1.5 L5.2 5.7 L9.4 1.5" stroke="#bdbdbd" stroke-width="1.1" fill="none"/></svg>
<span class="g" style="left:1677.50px;top:1038.78px;font-size:14.5px;color:#2b2b2b;letter-spacing:-1.046px;">:1</span>
<svg style="left:276.5px;top:215.3px" width="1426.5" height="792.5" viewBox="276.5 215.3 1426.5 792.5"><path d="M736.0 539.4 L748.5 533.8 L760.9 529.3 L779.0 521.6 L791.0 517.8 L816.5 510.8 L843.3 504.4 L871.6 499.5 L901.3 495.2 L929.5 492.4 L959.2 490.3 L986.0 488.9 L1013.4 487.9 L1039.6 487.7 L1065.0 487.8 L1090.4 488.1 L1113.7 488.4 L1137.0 489.0 L1159.6 490.0 L1181.5 491.0 L1202.7 492.2 L1223.2 493.7 L1244.5 494.7 L1270.0 510.5 L1273.2 526.1 L1276.5 545.9 L1279.8 569.6 L1282.0 592.0 L1283.0 610.0 L1282.8 626.4 L1281.0 652.5 L1277.7 673.0 L1273.3 691.0 L1269.7 704.2 L1264.3 719.4 L1256.7 735.8 L1241.6 760.2 L1228.9 774.2 L1214.6 787.8 L1200.3 799.0 L1182.8 810.3 L1164.3 819.6 L1145.9 827.8 L1124.8 834.9 L1102.4 840.1 L1078.6 844.1 L1054.2 847.4 L1028.2 850.0 L998.8 851.4 L969.4 851.4 L936.7 849.8 L901.6 847.0 L863.5 843.0 L823.9 836.5 L779.1 829.2 L737.0 820.7 L717.5 811.4 L696.8 795.5 L684.4 772.0 L674.0 749.2 L670.9 734.7 L669.8 716.0 L673.0 697.4 L680.2 676.7 L692.6 653.9 L705.0 635.2 L685.2 645.3 L668.2 654.5 L655.0 660.5 L654.4 656.0 L655.8 641.7 L658.6 625.9 L663.7 610.1 L672.8 592.0 L685.2 576.2 L696.5 564.9 L719.1 546.8 L736.0 539.4Z" fill="#d9dbda" stroke="none"/><path d="M736.0 539.4 L748.5 533.8 L760.9 529.3 L779.0 521.6 L791.0 517.8 L816.5 510.8 L843.3 504.4 L871.6 499.5 L901.3 495.2 L929.5 492.4 L959.2 490.3 L986.0 488.9 L1013.4 487.9 L1039.6 487.7 L1065.0 487.8 L1090.4 488.1 L1113.7 488.4 L1137.0 489.0 L1159.6 490.0 L1181.5 491.0 L1202.7 492.2 L1223.2 493.7 L1244.5 494.7 L1270.0 510.5 L1273.2 526.1 L1276.5 545.9 L1279.8 569.6 L1282.0 592.0 L1283.0 610.0 L1282.8 626.4 L1281.0 652.5 L1277.7 673.0 L1273.3 691.0 L1269.7 704.2 L1264.3 719.4 L1256.7 735.8 L1241.6 760.2 L1228.9 774.2 L1214.6 787.8 L1200.3 799.0 L1182.8 810.3 L1164.3 819.6 L1145.9 827.8 L1124.8 834.9 L1102.4 840.1 L1078.6 844.1 L1054.2 847.4 L1028.2 850.0 L998.8 851.4 L969.4 851.4 L936.7 849.8 L901.6 847.0 L863.5 843.0 L823.9 836.5 L779.1 829.2 L737.0 820.7 L717.5 811.4 L696.8 795.5 L684.4 772.0 L674.0 749.2" fill="none" stroke="#8088d8" stroke-width="0.9"/><path d="M1244.5 494.7 L1270 510.5" stroke="#777" stroke-width="1"/><path d="M736.0 539.4 L719.1 546.8 L696.5 564.9 L685.2 576.2 L672.8 592.0 L663.7 610.1 L658.6 625.9 L655.8 641.7 L654.4 656.0 L654.3 662.2 L656.4 682.9 L660.5 703.6 L666.7 724.4 L674.0 749.2" fill="none" stroke="#7a84d8" stroke-width="1"/><path d="M776 545 L913 465.7 L1188 625 M735 612 L913 509.7 L1188 668.5" fill="none" stroke="#7f7f7f" stroke-width="1" stroke-dasharray="14 6.5"/><path d="M793.9 433.8L791.0 517.8M801.0 426.7L816.5 510.8M811.6 416.8L843.3 504.4M825.0 409.8L871.6 499.5M841.2 406.2L901.3 495.2M859.6 404.8L929.5 492.4M880.0 404.8L959.2 490.3M902.0 406.2L986.0 488.9M926.0 408.4L1013.4 487.8M950.7 411.9L1039.6 487.8M976.1 415.4L1065.0 487.8M1000.0 418.5L1090.4 488.2M1028.3 423.8L1113.7 488.2M1056.5 429.4L1137.0 488.9M1084.0 435.0L1159.6 490.0M1112.3 440.6L1181.5 491.0M1140.6 446.3L1202.7 492.0M1168.1 452.4L1223.2 493.8M1197.3 459.1L1244.7 494.7M1269.9 510.6L1313.4 525.5M1272.2 522.2L1323.3 543.3M1274.5 534.0L1333.1 559.1M1276.7 547.2L1342.4 574.9M1278.7 559.8L1351.5 591.5M1280.0 572.8L1359.5 606.0M1281.3 585.9L1366.0 621.0M1282.0 599.4L1371.0 635.5M1282.3 613.3L1375.0 648.8M1282.3 628.3L1377.0 660.5M1281.4 644.0L1377.0 672.0M1280.0 659.7L1374.0 682.5M1277.0 676.2L1367.0 691.0M1273.0 692.7L1356.0 697.8M902.8 745.9L901.6 846.4M916.3 722.1L936.7 849.4M932.8 706.3L969.0 851.0M952.5 695.7L998.8 851.0M974.0 687.6L1028.2 849.8M998.8 682.6L1054.2 847.1M1024.6 679.6L1078.6 844.1M1051.0 680.1L1102.4 840.1M1080.0 682.0L1124.8 834.9M1109.0 685.1L1145.9 827.8M1139.3 689.1L1164.3 819.6M1169.6 693.8L1182.8 810.3M1199.5 697.3L1199.5 800.3M1229.0 701.6L1214.6 787.5M1257.6 705.0L1229.2 773.5M1281.2 711.4L1241.6 759.1M1291.6 717.2L1260.8 726.5M1267.8 709.7L1281.2 709.1M654.1 649.6L746.5 595.0M656.4 633.8L757.5 575.0M660.9 618.0L764.3 559.8M667.1 603.3L770.0 545.6M675.0 589.7L774.3 534.3M685.2 577.3L777.0 523.2M696.5 564.9L778.5 511.7M776.5 486.3L748.0 512.5M774.8 497.0L733.0 531.5M771.8 499.7L768.7 522.5M758.4 508.0L745.9 536.0M575.5 692.2L696.8 794.8M618.0 678.3L684.4 771.0M737.6 821.3L903.7 883.3M780.4 829.2L893.1 837.1M831.8 831.8L890.5 799.5M863.5 843.0L895.1 767.9M684.0 646.5L657.0 684.0M685.0 646.5L666.2 722.0M700.0 637.0L660.5 703.6M705.0 633.0L668.5 728.0M654.5 663.0L673.5 748.0M1319.5 709.7 Q1283 722 1251.5 743.4M1303 711.6 Q1274 724 1250.5 745M780.1 458.3 L770.8 479 L758.4 496.6 L748 510 L731.4 530.8 L715.9 546.3 L703.5 560 L690 574.5M778.6 470 L768 489.5 L757 504 L744 520.5 L729 537.5 L714 552" fill="none" stroke="#1b2a23" stroke-width="3.2" stroke-linecap="round"/><path d="M823.9 833.5 V839" stroke="#1b2a23" stroke-width="2"/><path d="M575.5 692.2 C582.6 689.8 604.8 683.0 618.0 677.7 C631.2 672.4 646.6 664.4 655.0 660.5 C663.4 656.6 663.2 657.0 668.2 654.5 C673.2 652.0 678.6 649.3 685.2 645.3 C691.8 641.3 700.6 635.5 707.8 630.4 C714.9 625.3 722.3 619.9 728.1 614.6 C733.9 609.3 738.5 604.1 742.8 598.8 C747.1 593.5 750.7 588.4 754.1 582.9 C757.5 577.4 760.8 571.3 763.2 566.0 C765.7 560.7 767.2 556.0 768.8 551.3 C770.3 546.6 771.3 543.4 772.5 538.0 C773.7 532.6 775.2 525.1 776.2 519.1 C777.2 513.1 777.9 507.8 778.4 502.1 C778.9 496.5 779.0 490.9 779.5 485.2 C780.0 479.5 780.4 473.8 781.2 468.2 C782.1 462.6 783.4 456.3 784.6 451.3 C785.8 446.3 786.3 442.6 788.3 438.0 C790.3 433.4 793.2 427.9 796.7 423.9 C800.2 419.9 804.7 416.6 809.4 414.0 C814.1 411.4 819.6 409.8 825.0 408.4 C830.4 407.0 836.2 406.2 841.9 405.5 C847.5 404.8 852.5 404.3 858.9 404.1 C865.2 403.9 872.9 403.9 880.0 404.1 C887.1 404.3 893.8 404.9 901.3 405.5 C908.8 406.1 917.1 406.8 925.3 407.7 C933.5 408.6 942.2 410.0 950.7 411.2 C959.2 412.4 967.9 413.6 976.1 414.7 C984.3 415.8 991.3 416.6 1000.0 418.0 C1008.7 419.4 1018.9 421.4 1028.3 423.2 C1037.7 425.0 1047.1 426.9 1056.5 428.8 C1065.9 430.7 1075.4 432.6 1084.8 434.5 C1094.2 436.4 1103.6 438.2 1113.0 440.1 C1122.4 442.0 1132.1 443.9 1141.3 445.8 C1150.5 447.7 1158.8 449.5 1168.1 451.6 C1177.4 453.7 1192.2 457.4 1197.0 458.6" fill="none" stroke="#90a8e6" stroke-width="5" stroke-linecap="butt" opacity="0.75"/><path d="M575.5 692.2 C582.6 689.8 604.8 683.0 618.0 677.7 C631.2 672.4 646.6 664.4 655.0 660.5 C663.4 656.6 663.2 657.0 668.2 654.5 C673.2 652.0 678.6 649.3 685.2 645.3 C691.8 641.3 700.6 635.5 707.8 630.4 C714.9 625.3 722.3 619.9 728.1 614.6 C733.9 609.3 738.5 604.1 742.8 598.8 C747.1 593.5 750.7 588.4 754.1 582.9 C757.5 577.4 760.8 571.3 763.2 566.0 C765.7 560.7 767.2 556.0 768.8 551.3 C770.3 546.6 771.3 543.4 772.5 538.0 C773.7 532.6 775.2 525.1 776.2 519.1 C777.2 513.1 777.9 507.8 778.4 502.1 C778.9 496.5 779.0 490.9 779.5 485.2 C780.0 479.5 780.4 473.8 781.2 468.2 C782.1 462.6 783.4 456.3 784.6 451.3 C785.8 446.3 786.3 442.6 788.3 438.0 C790.3 433.4 793.2 427.9 796.7 423.9 C800.2 419.9 804.7 416.6 809.4 414.0 C814.1 411.4 819.6 409.8 825.0 408.4 C830.4 407.0 836.2 406.2 841.9 405.5 C847.5 404.8 852.5 404.3 858.9 404.1 C865.2 403.9 872.9 403.9 880.0 404.1 C887.1 404.3 893.8 404.9 901.3 405.5 C908.8 406.1 917.1 406.8 925.3 407.7 C933.5 408.6 942.2 410.0 950.7 411.2 C959.2 412.4 967.9 413.6 976.1 414.7 C984.3 415.8 991.3 416.6 1000.0 418.0 C1008.7 419.4 1018.9 421.4 1028.3 423.2 C1037.7 425.0 1047.1 426.9 1056.5 428.8 C1065.9 430.7 1075.4 432.6 1084.8 434.5 C1094.2 436.4 1103.6 438.2 1113.0 440.1 C1122.4 442.0 1132.1 443.9 1141.3 445.8 C1150.5 447.7 1158.8 449.5 1168.1 451.6 C1177.4 453.7 1192.2 457.4 1197.0 458.6" fill="none" stroke="#5273c6" stroke-width="3.3" stroke-linecap="butt"/><path d="M1313.4 525.5 C1315.1 528.5 1320.0 537.7 1323.3 543.3 C1326.6 548.9 1329.7 553.6 1333.1 559.1 C1336.5 564.6 1340.4 570.5 1343.7 576.2 C1347.0 581.9 1350.1 587.9 1352.9 593.4 C1355.8 598.9 1358.6 604.9 1360.8 609.2 C1363.0 613.5 1364.1 614.8 1366.1 619.0 C1368.1 623.2 1370.8 628.7 1372.7 634.3 C1374.6 639.9 1376.3 647.6 1377.3 652.7 C1378.3 657.8 1378.9 660.5 1378.8 665.0 C1378.7 669.5 1378.0 675.4 1376.6 679.5 C1375.2 683.6 1373.1 686.6 1370.5 689.5 C1367.9 692.4 1364.7 694.8 1361.0 696.8 C1357.3 698.8 1353.6 700.1 1348.5 701.6 C1343.4 703.1 1337.7 704.5 1330.5 705.5 C1323.3 706.5 1313.1 707.5 1305.5 707.8 C1297.9 708.1 1292.6 707.8 1284.7 707.3 C1276.8 706.8 1267.2 706.0 1257.9 705.0 C1248.6 704.0 1238.5 702.8 1228.8 701.5 C1219.1 700.2 1209.4 698.6 1199.8 697.3 C1190.2 696.0 1181.0 694.9 1170.9 693.5 C1160.8 692.1 1149.6 690.4 1139.3 689.0 C1129.0 687.6 1118.9 686.2 1109.0 685.0 C1099.1 683.8 1089.7 682.8 1080.0 682.0 C1070.3 681.2 1060.2 680.4 1051.0 680.0 C1041.8 679.6 1033.2 679.2 1024.5 679.6 C1015.8 680.0 1007.2 681.2 998.8 682.6 C990.4 684.0 981.9 685.9 974.0 688.2 C966.1 690.5 958.4 693.2 951.4 696.2 C944.4 699.2 938.1 702.2 932.1 706.3 C926.1 710.4 920.1 715.5 915.2 721.0 C910.3 726.5 906.2 732.3 902.8 739.1 C899.4 745.9 896.8 753.8 894.9 761.7 C893.0 769.6 891.8 777.7 891.3 786.6 C890.8 795.5 891.3 805.8 892.0 815.0 C892.7 824.2 894.2 833.7 895.5 842.0 C896.8 850.3 898.1 858.2 899.5 865.0 C900.9 871.8 903.1 879.8 903.8 882.8" fill="none" stroke="#90a8e6" stroke-width="5" stroke-linecap="butt" opacity="0.75"/><path d="M1313.4 525.5 C1315.1 528.5 1320.0 537.7 1323.3 543.3 C1326.6 548.9 1329.7 553.6 1333.1 559.1 C1336.5 564.6 1340.4 570.5 1343.7 576.2 C1347.0 581.9 1350.1 587.9 1352.9 593.4 C1355.8 598.9 1358.6 604.9 1360.8 609.2 C1363.0 613.5 1364.1 614.8 1366.1 619.0 C1368.1 623.2 1370.8 628.7 1372.7 634.3 C1374.6 639.9 1376.3 647.6 1377.3 652.7 C1378.3 657.8 1378.9 660.5 1378.8 665.0 C1378.7 669.5 1378.0 675.4 1376.6 679.5 C1375.2 683.6 1373.1 686.6 1370.5 689.5 C1367.9 692.4 1364.7 694.8 1361.0 696.8 C1357.3 698.8 1353.6 700.1 1348.5 701.6 C1343.4 703.1 1337.7 704.5 1330.5 705.5 C1323.3 706.5 1313.1 707.5 1305.5 707.8 C1297.9 708.1 1292.6 707.8 1284.7 707.3 C1276.8 706.8 1267.2 706.0 1257.9 705.0 C1248.6 704.0 1238.5 702.8 1228.8 701.5 C1219.1 700.2 1209.4 698.6 1199.8 697.3 C1190.2 696.0 1181.0 694.9 1170.9 693.5 C1160.8 692.1 1149.6 690.4 1139.3 689.0 C1129.0 687.6 1118.9 686.2 1109.0 685.0 C1099.1 683.8 1089.7 682.8 1080.0 682.0 C1070.3 681.2 1060.2 680.4 1051.0 680.0 C1041.8 679.6 1033.2 679.2 1024.5 679.6 C1015.8 680.0 1007.2 681.2 998.8 682.6 C990.4 684.0 981.9 685.9 974.0 688.2 C966.1 690.5 958.4 693.2 951.4 696.2 C944.4 699.2 938.1 702.2 932.1 706.3 C926.1 710.4 920.1 715.5 915.2 721.0 C910.3 726.5 906.2 732.3 902.8 739.1 C899.4 745.9 896.8 753.8 894.9 761.7 C893.0 769.6 891.8 777.7 891.3 786.6 C890.8 795.5 891.3 805.8 892.0 815.0 C892.7 824.2 894.2 833.7 895.5 842.0 C896.8 850.3 898.1 858.2 899.5 865.0 C900.9 871.8 903.1 879.8 903.8 882.8" fill="none" stroke="#5273c6" stroke-width="3.3" stroke-linecap="butt"/><g><circle cx="680.5" cy="601" r="4" fill="#1f3fae"/><path d="M678 602 L680 599.5 L681.5 601.5 L683 599" stroke="#fff" stroke-width="1" fill="none"/><rect x="689" y="589.5" width="13" height="5.5" fill="#f4f4f4" stroke="#9a9a9a" stroke-width=".6" transform="rotate(-14 695 592)"/><rect x="689" y="596.5" width="8" height="5.5" fill="#f4f4f4" stroke="#9a9a9a" stroke-width=".6" transform="rotate(-8 693 599)"/><path d="M716 579 L730 572" stroke="#a9a9a9" stroke-width="1.3"/></g></svg>
<svg style="left:1520px;top:265px" width="170" height="140" viewBox="1520 265 170 140"><defs><radialGradient id="sh" cx="50%" cy="50%" r="50%"><stop offset="0" stop-color="#bdbdbd" stop-opacity=".75"/><stop offset="1" stop-color="#bdbdbd" stop-opacity="0"/></radialGradient><linearGradient id="fl" x1="0" y1="0" x2="0" y2="1"><stop offset="0" stop-color="#ebebeb"/><stop offset="1" stop-color="#dcdcdc"/></linearGradient><linearGradient id="fr" x1="0" y1="0" x2="0" y2="1"><stop offset="0" stop-color="#e6e6e6"/><stop offset="1" stop-color="#d6d6d6"/></linearGradient></defs><path d="M1530.5 347.5 A71.5 48 0 1 0 1673.5 347.5 A71.5 48 0 1 0 1530.5 347.5Z M1546 345 A56 35 0 1 1 1658 345 A56 35 0 1 1 1546 345Z" fill="#f1f1f1" fill-rule="evenodd" stroke="#cdcdcd" stroke-width="1" stroke-dasharray="1.2 1"/><ellipse cx="1604" cy="356" rx="46" ry="22" fill="url(#sh)"/><path d="M1601.8 277.2 L1641.2 294.6 L1601.8 316.2 L1563.5 295.6Z" fill="#efefef" stroke="#bcbcbc" stroke-width="1"/><path d="M1563.5 295.6 L1601.8 316.2 L1601.8 363.3 L1566.2 339.9Z" fill="url(#fl)" stroke="#bcbcbc" stroke-width="1"/><path d="M1601.8 316.2 L1641.2 294.6 L1638.8 338.2 L1601.8 363.3Z" fill="url(#fr)" stroke="#bcbcbc" stroke-width="1"/><text x="0" y="3.4" font-family="Liberation Sans, sans-serif" font-size="8.6" fill="#80808a" text-anchor="middle" transform="matrix(0.8807 0.4737 -1.08 0.52 1602.8 296.2)">TOP</text><text x="0" y="3.2" font-family="Liberation Sans, sans-serif" font-size="8.8" fill="#80808a" text-anchor="middle" transform="matrix(0.8807 0.4737 0 1.32 1583.2 330.6)">FRONT</text><text x="0" y="3.2" font-family="Liberation Sans, sans-serif" font-size="8.8" fill="#80808a" text-anchor="middle" transform="matrix(0.877 -0.481 0 1.32 1621.2 329.8)">RIGHT</text><text x="1551" y="381" font-family="Liberation Sans, sans-serif" font-size="17" font-weight="700" fill="#e6e6e6" stroke="#bdbdbd" stroke-width=".7" text-anchor="middle" transform="rotate(-48 1551 375)">S</text><text x="1652" y="380.5" font-family="Liberation Sans, sans-serif" font-size="17" font-weight="700" fill="#e6e6e6" stroke="#bdbdbd" stroke-width=".7" text-anchor="middle" transform="rotate(52 1652 374.5)">E</text><text x="1556" y="320" font-family="Liberation Sans, sans-serif" font-size="15" font-weight="700" fill="#e6e6e6" stroke="#c2c2c2" stroke-width=".7" text-anchor="middle" transform="rotate(40 1556 315)">W</text><text x="1647" y="321" font-family="Liberation Sans, sans-serif" font-size="15" font-weight="700" fill="#e6e6e6" stroke="#c2c2c2" stroke-width=".7" text-anchor="middle" transform="rotate(-40 1647 316)">N</text></svg>
<svg style="left:1658px;top:405px" width="46" height="146" viewBox="1658 405 46 146"><rect x="1662" y="409" width="39.5" height="137.5" rx="4" fill="#f6f6f6" stroke="#cfcfcf" stroke-width="1.3"/><path d="M1664 477.7 H1699.5" stroke="#dcdcdc" stroke-width="1"/><circle cx="1694" cy="416.5" r="3.6" fill="#e0e0e0" stroke="#bcbcbc" stroke-width="1"/><path d="M1692.3 414.3 L1695.7 417.7 M1695.7 414.3 L1692.3 417.7" stroke="#a5a5a5" stroke-width=".9"/><circle cx="1694.2" cy="538.7" r="3.6" fill="#e0e0e0" stroke="#bcbcbc" stroke-width="1"/><path d="M1692.2 538.7 H1696.2" stroke="#a0a0a0" stroke-width="1"/><path d="M1667.3 441.6 A11.6 11.6 0 0 1 1678.9 430 H1690 V446 A7.6 7.6 0 0 1 1682.4 453.2 H1678.9 A11.6 11.6 0 0 1 1667.3 441.6Z" fill="#ececee" stroke="#a3a3a3" stroke-width="1.8"/><circle cx="1678.6" cy="441.4" r="5.2" fill="#f6f6f7" stroke="#a3a3a3" stroke-width="1.6"/><path d="M1684 448.5 L1691 444.8 L1696.6 446.6 L1696.6 454.6 L1690 458 L1684 455.8Z" fill="#a9c9ec" stroke="#6f9fd6" stroke-width="1"/><path d="M1684.2 448.8 L1690 450.6 L1696.4 446.8 L1691 445.2Z" fill="#c9def4"/><path d="M1690 450.6 V458" stroke="#7aa6d8" stroke-width=".8" fill="none"/><path d="M1678 467.5 L1684.5 467.5 L1681.2 471Z" fill="#7a7a7a"/><rect x="1671" y="487" width="14" height="13.5" fill="#a9cf96" stroke="#8db978" stroke-width=".8"/><circle cx="1685.5" cy="500" r="3.6" fill="#f4f4f4" stroke="#8c8c8c" stroke-width="1.2"/><path d="M1688 502.7 L1691 506.5" stroke="#777" stroke-width="1.8"/><path d="M1678 520.5 L1684.5 520.5 L1681.2 524Z" fill="#7a7a7a"/></svg>
<svg width="0" height="0" style="left:0;top:0"><defs><linearGradient id="gw" x1="0" y1="0" x2="0" y2="1"><stop offset="0" stop-color="#d5d8df"/><stop offset="1" stop-color="#fbfbfc"/></linearGradient><linearGradient id="gw2" x1="0" y1="0" x2="0" y2="1"><stop offset="0" stop-color="#fafafa"/><stop offset="1" stop-color="#dcdee3"/></linearGradient><linearGradient id="gb" x1="0" y1="0" x2="0" y2="1"><stop offset="0" stop-color="#c6e2f1"/><stop offset="1" stop-color="#a6d0e8"/></linearGradient><linearGradient id="gpen" x1="0" y1="0" x2="1" y2="1"><stop offset="0" stop-color="#ffe27a"/><stop offset="1" stop-color="#e5a100"/></linearGradient><linearGradient id="gbtn" x1="0" y1="0" x2="0" y2="1"><stop offset="0" stop-color="#c4ddf3"/><stop offset="1" stop-color="#accfee"/></linearGradient><radialGradient id="gbulb" cx="40%" cy="35%" r="65%"><stop offset="0" stop-color="#ffffff"/><stop offset="1" stop-color="#b9d3f6"/></radialGradient><radialGradient id="gsph" cx="40%" cy="35%" r="65%"><stop offset="0" stop-color="#ffffff"/><stop offset="1" stop-color="#cfd2d8"/></radialGradient><radialGradient id="gsun" cx="50%" cy="50%" r="50%"><stop offset="0" stop-color="#fff6b0"/><stop offset="1" stop-color="#f2b51e"/></radialGradient><linearGradient id="gpin" x1="0" y1="0" x2="0" y2="1"><stop offset="0" stop-color="#f07a1a"/><stop offset=".5" stop-color="#ffd9a0"/><stop offset="1" stop-color="#f08a2a"/></linearGradient></defs></svg>
<svg style="left:4px;top:37px" width="56" height="50" viewBox="4 37 56 50"><path d="M25 48.3 L25 69.5 L29.4 66 L33.8 73 L37.6 70.6 L33.4 64.2 L39.4 62.6Z" fill="url(#gw2)" stroke="#565a63" stroke-width="1.3" stroke-linejoin="round"/></svg>
<svg style="left:88px;top:39px" width="42" height="42" viewBox="88 39 42 42"><path d="M108 44.91 L111.41 41.5 H123.5 V53.59 L120.09 57.0 H108Z" fill="#e3e5ea" stroke="#7d828c" stroke-width="1.3" stroke-linejoin="round"/><path d="M108 44.91 H120.09 V57.0 M120.09 44.91 L123.5 41.5" fill="none" stroke="#7d828c" stroke-width="1"/><path d="M108.7 44.709999999999994 L111.71 42.2 H122.5 L119.79 44.709999999999994Z" fill="#fdfdfd"/><path d="M120.69 45.209999999999994 L122.9 42.7 V53.290000000000006 L120.69 56.2Z" fill="#cfd2d9"/><path d="M91 44.91 L94.41 41.5 H106.5 V53.59 L103.09 57.0 H91Z" fill="#e3e5ea" stroke="#7d828c" stroke-width="1.3" stroke-linejoin="round"/><path d="M91 44.91 H103.09 V57.0 M103.09 44.91 L106.5 41.5" fill="none" stroke="#7d828c" stroke-width="1"/><path d="M91.7 44.709999999999994 L94.71 42.2 H105.5 L102.79 44.709999999999994Z" fill="#fdfdfd"/><path d="M103.69 45.209999999999994 L105.9 42.7 V53.290000000000006 L103.69 56.2Z" fill="#cfd2d9"/><path d="M108 61.91 L111.41 58.5 H123.5 V70.59 L120.09 74.0 H108Z" fill="#e3e5ea" stroke="#7d828c" stroke-width="1.3" stroke-linejoin="round"/><path d="M108 61.91 H120.09 V74.0 M120.09 61.91 L123.5 58.5" fill="none" stroke="#7d828c" stroke-width="1"/><path d="M108.7 61.709999999999994 L111.71 59.2 H122.5 L119.79 61.709999999999994Z" fill="#fdfdfd"/><path d="M120.69 62.209999999999994 L122.9 59.7 V70.29 L120.69 73.2Z" fill="#cfd2d9"/><path d="M91 61.91 L94.41 58.5 H106.5 V70.59 L103.09 74.0 H91Z" fill="#e3e5ea" stroke="#7d828c" stroke-width="1.3" stroke-linejoin="round"/><path d="M91 61.91 H103.09 V74.0 M103.09 61.91 L106.5 58.5" fill="none" stroke="#7d828c" stroke-width="1"/><path d="M91.7 61.709999999999994 L94.71 59.2 H105.5 L102.79 61.709999999999994Z" fill="#fdfdfd"/><path d="M103.69 62.209999999999994 L105.9 59.7 V70.29 L103.69 73.2Z" fill="#cfd2d9"/><rect x="111.2" y="56.3" width="15.8" height="21.5" rx="1.2" fill="#f8f8f9" stroke="#6d727c" stroke-width="1.4"/><rect x="113.8" y="58.8" width="6.6" height="6.2" fill="#3f73b0"/><rect x="122" y="58.8" width="2.2" height="6.2" fill="#b4b7be"/><path d="M114.5 69 H124 M114.5 73.2 H124" stroke="#8a8e97" stroke-width="1"/><path d="M117 67.6 V70.4 M121.5 71.8 V74.6" stroke="#8a8e97" stroke-width="1.4"/></svg>
<svg style="left:85px;top:83px" width="49" height="45" viewBox="85 83 49 45"><rect x="94.9" y="86.5" width="25.6" height="36.6" rx="1.5" fill="#fbfbfc" stroke="#676c76" stroke-width="1.6"/><rect x="98.4" y="90" width="13.2" height="12.8" fill="#3f73b0"/><rect x="98.4" y="90" width="13.2" height="5" fill="#3a689f"/><rect x="113.9" y="90" width="2.9" height="12.8" fill="#b9bcc3"/><path d="M99 109 H116 M99 116.9 H116" stroke="#70757f" stroke-width="1.2"/><path d="M103 106.6 V111.4 M112 114.5 V119.3" stroke="#70757f" stroke-width="2"/></svg>
<svg style="left:166px;top:39px" width="40" height="44" viewBox="166 39 40 44"><rect x="170.5" y="44.5" width="26.5" height="30.5" rx="2" fill="#e6e6e6" stroke="#cdcdcd" stroke-width="1.3"/><rect x="176.5" y="41.8" width="14" height="5.5" rx="2.7" fill="#ededed" stroke="#cdcdcd" stroke-width="1.2"/><path d="M179.8 52.5 H194.5 L200.7 58.7 V78.6 H179.8Z" fill="#f4f4f4" stroke="#d0d0d0" stroke-width="1.3" stroke-linejoin="round"/><path d="M194.5 52.5 V58.7 H200.7" fill="#e8e8e8" stroke="#d0d0d0" stroke-width="1"/></svg>
<svg style="left:221px;top:40px" width="24" height="24" viewBox="221 40 24 24"><path d="M224.6 43.6 L239.8 60.2 M239.9 43.6 L224.7 60.2" stroke="#5a5f69" stroke-width="4.2" stroke-linecap="round"/><path d="M224.8 43.8 L230.6 50.2 M239.7 43.8 L233.9 50.2" stroke="#d9dce1" stroke-width="1.5" stroke-linecap="round"/><path d="M235 55 L239.6 60 M229.5 55 L224.9 60" stroke="#f3f4f6" stroke-width="1.7" stroke-linecap="round"/><circle cx="232.3" cy="52.2" r="1.9" fill="#3c4049"/></svg>
<svg style="left:220px;top:71px" width="25" height="24" viewBox="220 71 25 24"><path d="M222.8 73.3 H232 L235 76.3 V89.5 H222.8Z" fill="#eceef2" stroke="#6b707a" stroke-width="1.3" stroke-linejoin="round"/><path d="M228.3 77.3 H237.2 L242 82 V92.3 H228.3Z" fill="url(#gw2)" stroke="#5d626c" stroke-width="1.4" stroke-linejoin="round"/><path d="M237.2 77.3 V82 H242" fill="none" stroke="#5d626c" stroke-width="1.1"/></svg>
<svg style="left:220px;top:102px" width="25" height="24" viewBox="220 102 25 24"><rect x="222.8" y="104" width="10" height="11.3" fill="#f3f4f6" stroke="#5f646e" stroke-width="1.3"/><rect x="224.8" y="106" width="4.5" height="2" fill="#2e6fc0"/><path d="M224.8 110 H230 M224.8 112.4 H229" stroke="#8a8e97" stroke-width=".9"/><path d="M242.5 105.2 L236.3 113" stroke="#d39a2a" stroke-width="3"/><path d="M237.6 111.3 L234.8 114.9" stroke="#e9e9ec" stroke-width="3.3"/><path d="M235.4 113.5 Q231 116 229 121 Q227 123 222.5 123.3 Q232 125 236.5 119 Q238.3 116.5 237.3 115Z" fill="#5a5f69"/></svg>
<svg style="left:258px;top:40px" width="25" height="24" viewBox="258 40 25 24"><path d="M260.6 42.8 H268.8 V45.3 Q266.2 45.5 266 47.5 V56.8 Q266.2 58.8 268.8 59 V61.6 H260.6 V59 Q263.2 58.8 263.4 56.8 V47.5 Q263.2 45.5 260.6 45.3Z" fill="#8d9199" stroke="#555a63" stroke-width="1"/><path d="M280.3 42.8 Q277.3 43.3 277.3 45.3 Q277.3 47.2 274.5 47.2 V57.2 Q277.3 57.2 277.3 59.1 Q277.3 61.1 280.3 61.6Z" fill="#e3e5ea" stroke="none"/><path d="M280.3 42.8 Q277.3 43.3 277.3 45.3 Q277.3 47.2 273 47.2 M273 57.2 Q277.3 57.2 277.3 59.1 Q277.3 61.1 280.3 61.6 M274 47.2 V57.2" fill="none" stroke="#5c616b" stroke-width="1.2"/><path d="M267.3 52.2 L271.6 49.6 V54.8Z" fill="#22252b"/><path d="M271 52.2 H275" stroke="#22252b" stroke-width="1.3"/></svg>
<svg style="left:258px;top:71px" width="25" height="24" viewBox="258 71 25 24"><rect x="267" y="73" width="13.5" height="13.8" rx="1" fill="url(#gb)" stroke="#4a8fd1" stroke-width="1.5"/><circle cx="267.2" cy="85.6" r="6.6" fill="#fafafb" stroke="#3f434c" stroke-width="1.4"/><path d="M267.8 79 A6.6 6.6 0 0 1 273.8 85" fill="none" stroke="#f0393c" stroke-width="1.7"/></svg>
<svg style="left:258px;top:101px" width="25" height="25" viewBox="258 101 25 25"><rect x="267" y="103.6" width="13.5" height="13.6" rx="1" fill="url(#gb)" stroke="#4a8fd1" stroke-width="1.5"/><circle cx="267.2" cy="116" r="6.6" fill="#b5d8ec" fill-opacity=".9" stroke="#3f86cf" stroke-width="1.6"/></svg>
<svg style="left:348px;top:40px" width="24" height="24" viewBox="348 40 24 24"><path d="M350.5 43 H360.5 V49.5 H369.6 V58.3 H360.5 V61.8 H350.5Z" fill="#e2e2e2" stroke="#d2d2d2" stroke-width="1.2"/><path d="M360 46 L356 52 L359 54 L355 60" fill="none" stroke="#f1f1f1" stroke-width="1.8"/></svg>
<svg style="left:381px;top:40px" width="23" height="25" viewBox="381 40 23 25"><path d="M383.2 45.5 L388.5 42.7 Q392 46.8 396 47 L400.9 45 V58.6 L396.8 62 Q388.5 60.5 383.2 55.8Z" fill="#f7f8fa" stroke="#5a5f6a" stroke-width="1.3" stroke-linejoin="round"/><path d="M396.8 49 L400.9 45 M396.8 49 V62" stroke="#8a8f99" stroke-width="1"/><path d="M396.9 49.2 L400.6 45.8 V58.4 L397 61.5Z" fill="#cfd2d9"/><path d="M385.6 49.6 Q389.5 52.6 394.4 53.4 V59 Q389.5 58 385.6 55Z" fill="#4a90d9" stroke="#2f71bd" stroke-width="1"/><path d="M388 53 Q390 54.3 392 54.8 V56.4 Q390 55.9 388 54.6Z" fill="#9cc6ee"/></svg>
<svg style="left:348px;top:71px" width="24" height="24" viewBox="348 71 24 24"><path d="M351.8 73 V79" stroke="#3f9bf0" stroke-width="1.5"/><path d="M349.8 77.3 L351.8 80.5 L353.8 77.3Z" fill="#3f9bf0"/><rect x="355.5" y="73.3" width="6.3" height="6" fill="#a6a9b0" stroke="#6f747d" stroke-width="1"/><rect x="355.3" y="82.3" width="14.5" height="5.6" fill="#a6a9b0" stroke="#646973" stroke-width="1.1"/><path d="M358.5 83.3 V87 M361.5 83.3 V87 M364.5 83.3 V87 M367.3 83.3 V87" stroke="#e4e5e8" stroke-width="1"/><path d="M355.5 91.4 H360" stroke="#3f9bf0" stroke-width="1.5"/><path d="M358.8 89.4 L362 91.4 L358.8 93.4Z" fill="#3f9bf0"/></svg>
<svg style="left:380px;top:71px" width="24" height="24" viewBox="380 71 24 24"><circle cx="386.8" cy="77.8" r="4.6" fill="#f0f1f3" stroke="#5a5f69" stroke-width="1.2"/><path d="M384.6 75.6 L389 80 M389 75.6 L384.6 80" stroke="#7d828c" stroke-width="1"/><rect x="391.6" y="82" width="9.8" height="10" rx="1" fill="url(#gw2)" stroke="#4f545e" stroke-width="1.4"/><path d="M382.6 84.6 V87.5 Q382.6 90 385.4 90" fill="none" stroke="#22252b" stroke-width="1.3"/><path d="M384.8 87.8 L388.2 90 L384.8 92.2Z" fill="#22252b"/></svg>
<svg style="left:348px;top:101px" width="25" height="25" viewBox="348 101 25 25"><path d="M351 103.5 V108.5 M354 103.5 V108.5 M356.6 103.5 V108.5" stroke="#6a6f79" stroke-width="1.1"/><path d="M350.2 110 H357.4 V116.4 H362.5 V123.5 H350.2Z" fill="#9ccaf0"/><path d="M351 110 V122.6 H362.5 M354 110 V119.6 H362.5 M356.6 110 V117 H362.5" fill="none" stroke="#2c78c8" stroke-width="1.2"/><path d="M364 117.3 H370 M364 122.5 H370" stroke="#5a5f69" stroke-width="1.5"/><path d="M364 119.9 H370" stroke="#f7f7f8" stroke-width="1.5"/><path d="M357.60 116.20 L362.64 114.19 L359.69 111.20Z" fill="#f5f0e6" stroke="#8a8072" stroke-width=".7"/><path d="M357.60 116.20 L359.23 115.58 L358.25 114.58Z" fill="#444"/><path d="M362.64 114.19 L368.69 108.24 L365.75 105.25 L359.69 111.20Z" fill="url(#gpen)" stroke="#a87800" stroke-width=".7"/><path d="M361.17 112.69 L367.22 106.74" stroke="#fff3b0" stroke-width="1.2"/><path d="M368.69 108.24 L370.97 106.00 L368.03 103.00 L365.75 105.25Z" fill="#b5622a" stroke="#8a4516" stroke-width=".7"/></svg>
<svg style="left:380px;top:101px" width="25" height="25" viewBox="380 101 25 25"><path d="M391 112 L400.8 122.2" stroke="#a8605a" stroke-width="3.2" stroke-linecap="round"/><path d="M391.3 111.4 L401 121.4" stroke="#dda9a2" stroke-width="1" stroke-linecap="round"/><path d="M382.3 111 L390.3 103.6 Q392 103 393 104.2 L395.3 107.5 Q395.6 108.8 394.5 109.7 L387 115.3 Q385.5 115.8 384.5 114.8Z" fill="#7a7f88" stroke="#4d525b" stroke-width="1"/><path d="M384 110.5 L390.8 104.8" stroke="#b9bcc3" stroke-width="1.3"/></svg>
<svg style="left:440px;top:40px" width="44" height="42" viewBox="440 40 44 42"><path d="M443.1 43 V69.3 M480.1 43 V62.4" stroke="#5a606b" stroke-width="1.7"/><path d="M446 51 H477.5" stroke="#5a606b" stroke-width="1.6"/><path d="M443.9 51 L448.8 47.6 V54.4Z M479.3 51 L474.4 47.6 V54.4Z" fill="#474c56"/><path d="M470.9 73 V79" stroke="#6a6f79" stroke-width="1.2"/><path d="M466.3 59.3 H475.8 Q476.7 59.3 476.5 60.3 L475.3 62.6 V66.5 Q477.5 67.8 477.9 71.2 Q478 72.6 476.8 72.6 H465.2 Q464 72.6 464.1 71.2 Q464.5 67.8 466.7 66.5 V62.6 L465.6 60.3 Q465.4 59.3 466.3 59.3Z" fill="url(#gpin)" stroke="#d46a12" stroke-width="1"/><path d="M467 63.7 H475 M466 69.3 H476" stroke="#fff0d6" stroke-width="1.4"/></svg>
<svg style="left:504px;top:38px" width="42" height="43" viewBox="504 38 42 43"><path d="M507 40.2 V79.2" stroke="#25282e" stroke-width="1.8"/><rect x="509.6" y="44.5" width="13.8" height="12.2" rx="1.6" fill="url(#gb)" stroke="#4a90d9" stroke-width="1.6"/><rect x="509.6" y="61.5" width="33" height="14.6" rx="1.4" fill="url(#gw)" stroke="#767b85" stroke-width="1.6"/></svg>
<svg style="left:553px;top:40px" width="44" height="38" viewBox="553 40 44 38"><path d="M593.2 58.2 H581.3 V51.6 A8.3 8.3 0 0 0 564.7 51.6 V58.2 H561.5 A5.6 5.6 0 0 0 561.5 73.4 H593.2" fill="none" stroke="#4a90d9" stroke-width="1.8"/><path d="M593.2 58.2 H581.3 V51.6 A8.3 8.3 0 0 0 564.7 51.6 V58.2 H561.5 A5.6 5.6 0 0 0 561.5 73.4 H593.2" fill="none" stroke="#cfe3f5" stroke-width="3.6" stroke-opacity=".45"/><path d="M592.2 62.2 H577.4 V52 A4.3 4.3 0 0 0 568.8 52 V62.2 H562.5 A3.7 3.7 0 0 0 562.5 69.6 H592.2" fill="none" stroke="#747984" stroke-width="1.7"/></svg>
<svg style="left:604px;top:38px" width="40" height="43" viewBox="604 38 40 43"><path d="M606.6 45.2 Q606.6 44.2 607.8 44.4 L611 45.4 L617.4 52.3 V64.5 H612.3 V74 Q612.3 75.2 611 75.2 H607.8 Q606.6 75.2 606.6 74Z" fill="url(#gw)" stroke="#747984" stroke-width="1.5" stroke-linejoin="round"/><path d="M640 45.2 Q640 44.2 638.8 44.4 L635.6 45.4 L629.2 52.3 V75.2 H638.8 Q640 75.2 640 74Z" fill="#d7eaf6" stroke="#b5d5ec" stroke-width="1.3" stroke-linejoin="round"/><path d="M623.6 40.5 V54" stroke="#3fa535" stroke-width="2.6"/><path d="M623.6 76 V78" stroke="#3fa535" stroke-width="2.2"/><path d="M623.6 57.3 V74.6 L627.4 71.6 L630.2 77.8 L633.2 76.4 L630.5 70.4 L635.2 69.8Z" fill="#f4f5f7" stroke="#6a6f79" stroke-width="1.1" stroke-linejoin="round"/></svg>
<svg style="left:653px;top:38px" width="42" height="43" viewBox="653 38 42 43"><path d="M655.9 45.2 Q655.9 44.2 657.0999999999999 44.4 L660.3 45.4 L666.6999999999999 52.3 V64.5 H661.5999999999999 V74 Q661.5999999999999 75.2 660.3 75.2 H657.0999999999999 Q655.9 75.2 655.9 74Z" fill="url(#gw)" stroke="#747984" stroke-width="1.5" stroke-linejoin="round"/><path d="M689.3 45.2 Q689.3 44.2 688.0999999999999 44.4 L684.9 45.4 L678.5 52.3 V75.2 H688.0999999999999 Q689.3 75.2 689.3 74Z" fill="#d7eaf6" stroke="#b5d5ec" stroke-width="1.3" stroke-linejoin="round"/><path d="M672.8 40.3 V70.5" stroke="#3b8fe6" stroke-width="2.6"/><path d="M673.00 77.50 L678.55 76.06 L674.67 72.02Z" fill="#f5f0e6" stroke="#8a8072" stroke-width=".7"/><path d="M673.00 77.50 L674.64 76.90 L673.67 75.89Z" fill="#444"/><path d="M678.55 76.06 L690.23 64.84 L686.35 60.80 L674.67 72.02Z" fill="url(#gpen)" stroke="#a87800" stroke-width=".7"/><path d="M676.61 74.04 L688.29 62.82" stroke="#fff3b0" stroke-width="1.2"/><path d="M690.23 64.84 L692.54 62.62 L688.66 58.58 L686.35 60.80Z" fill="#b5622a" stroke="#8a4516" stroke-width=".7"/></svg>
<svg style="left:505px;top:84px" width="42" height="41" viewBox="505 84 42 41"><path d="M525.6 86 L533 94.6 H528.3 V100 H522.9 V94.6 H518.2Z M525.6 123 L533 114.4 H528.3 V109.2 H522.9 V114.4 H518.2Z M507.2 104.6 L515.8 97.2 V101.9 H521 V107.3 H515.8 V112Z M544 104.6 L535.4 97.2 V101.9 H530.2 V107.3 H535.4 V112Z" fill="#3e4450"/><rect x="522.4" y="101.4" width="6.4" height="6.4" fill="#fbfbfc" stroke="#5a5f69" stroke-width="1.3"/></svg>
<svg style="left:555px;top:84px" width="42" height="41" viewBox="555 84 42 41"><circle cx="564.7" cy="94.3" r="7.3" fill="url(#gsph)" stroke="#747984" stroke-width="1.5"/><path d="M575 91.2 H583 Q587 91.2 587 95.2 V97" fill="none" stroke="#22252b" stroke-width="1.5"/><path d="M583.6 96.6 L587 101 L590.4 96.6Z" fill="#22252b"/><circle cx="584" cy="115" r="6.9" fill="#cfe5f4" stroke="#4a90d9" stroke-width="1.5"/><circle cx="578.4" cy="110.4" r="7.3" fill="#b9daef" stroke="#4a90d9" stroke-width="1.6"/></svg>
<svg style="left:604px;top:84px" width="42" height="42" viewBox="604 84 42 42"><path d="M616 94.6 A14.3 14.3 0 1 0 634.5 96.5" fill="none" stroke="#3e4450" stroke-width="3.4"/><path d="M618 87.2 L629.8 92.8 L619.6 99.6Z" fill="#3e4450"/></svg>
<svg style="left:652px;top:86px" width="42" height="40" viewBox="652 86 42 40"><path d="M663.4 90.2 H677" stroke="#4b505a" stroke-width="1.7"/><path d="M676 86.8 L681 90.2 L676 93.6Z" fill="#4b505a"/><path d="M655 95.2 H670.5 M655 99.2 H670.5" stroke="#6c717b" stroke-width="1.5"/><path d="M670.4 94.2 H685.6 V108.4 H679.2 V100.2 H670.4Z" fill="#6db3f2"/><path d="M670.4 97.2 H682.4 V108.4" fill="none" stroke="#a5d1f7" stroke-width="1.4"/><path d="M680.2 108.4 V123.4 M684.3 108.4 V123.4" stroke="#6c717b" stroke-width="1.5"/><path d="M682.2 108.4 V123.4" stroke="#f8f8f9" stroke-width="1.3"/><path d="M689.3 102 V116" stroke="#4b505a" stroke-width="1.6"/><path d="M686.2 103 L689.3 98.2 L692.4 103Z" fill="#4b505a"/></svg>
<svg style="left:705px;top:44px" width="24" height="19" viewBox="705 44 24 19"><rect x="707.2" y="50.2" width="18" height="6.8" rx="2.2" fill="#9dcdf0" stroke="#3f8bd8" stroke-width="1.5"/><path d="M716.1 46.3 V60.6" stroke="#e0474c" stroke-width="1.1" stroke-dasharray="1.6 1.2"/><path d="M714.4 48.2 L716.1 45.8 L717.8 48.2 M714.4 58.8 L716.1 61.2 L717.8 58.8" fill="none" stroke="#e0474c" stroke-width=".9"/></svg>
<svg style="left:736px;top:44px" width="24" height="19" viewBox="736 44 24 19"><rect x="738.2" y="50.2" width="6.6" height="6.8" rx="1.8" fill="#9dcdf0" stroke="#3f8bd8" stroke-width="1.7"/><rect x="750.6" y="50.2" width="6.6" height="6.8" rx="1.8" fill="#9dcdf0" stroke="#3f8bd8" stroke-width="1.7"/><path d="M747.6 46.3 V60.6" stroke="#e0474c" stroke-width="1.1" stroke-dasharray="1.6 1.2"/><path d="M745.9 48.2 L747.6 45.8 L749.3 48.2 M745.9 58.8 L747.6 61.2 L749.3 58.8" fill="none" stroke="#e0474c" stroke-width=".9"/></svg>
<svg style="left:705px;top:72px" width="24" height="23" viewBox="705 72 24 23"><rect x="707.5" y="74" width="7.4" height="7.4" fill="#f6f6f7" stroke="#555a64" stroke-width="1.4"/><rect x="718.7" y="74" width="7.4" height="7.4" fill="#bfe0f0" stroke="#2f78c8" stroke-width="1.5"/><rect x="707.5" y="85" width="7.4" height="7.4" fill="#bfe0f0" stroke="#2f78c8" stroke-width="1.5"/><rect x="718.7" y="85" width="7.4" height="7.4" fill="#bfe0f0" stroke="#2f78c8" stroke-width="1.5"/></svg>
<svg style="left:736px;top:72px" width="24" height="23" viewBox="736 72 24 23"><rect x="738.8" y="73.6" width="18.6" height="18.6" fill="#e4e4e4" stroke="#dadada" stroke-width="1"/><path d="M738.8 92.2 V83.2 Q738.8 82.2 739.8 82.2 H747.8 Q748.8 82.2 748.8 83.2 V92.2Z" fill="#f1f1f1" stroke="#d6d6d6" stroke-width="1"/></svg>
<svg style="left:705px;top:102px" width="24" height="23" viewBox="705 102 24 23"><path d="M710.5 107.3 H717.5" stroke="#2b2e35" stroke-width="1.5"/><path d="M716.4 104.3 L720.6 107.3 L716.4 110.3Z" fill="#2b2e35"/><path d="M723.4 103.8 V123.2 M726.2 103.8 V123.2" stroke="#6c717b" stroke-width="1.5"/><path d="M707.2 113.7 H714 M707.2 116.6 H714" stroke="#6c717b" stroke-width="1.3"/><rect x="714" y="112.8" width="9" height="4.8" fill="#6db3f2"/></svg>
<svg style="left:736px;top:102px" width="24" height="23" viewBox="736 102 24 23"><path d="M742.5 106.3 H749.5" stroke="#2b2e35" stroke-width="1.5"/><path d="M748.4 103.3 L752.6 106.3 L748.4 109.3Z" fill="#2b2e35"/><path d="M754.8 103.8 V123.2 M757.4 103.8 V123.2" stroke="#6c717b" stroke-width="1.4"/><path d="M738.3 111.2 H746 M738.3 113.8 H746 M738.3 117.9 H746 M738.3 120.5 H746" stroke="#6c717b" stroke-width="1.2"/><rect x="746" y="110.4" width="9.4" height="4.4" fill="#6db3f2"/><rect x="746" y="117" width="9.4" height="4.4" fill="#6db3f2"/></svg>
<svg style="left:768px;top:42px" width="24" height="22" viewBox="768 42 24 22"><path d="M770.4 50.0 H776.0" stroke="#d3d3d3" stroke-width="1.1"/><path d="M776.1999999999999 45.2 Q778.4 46.6 779.4 46.6 H782.8 L785.4 44.0 V56.0 L782.8 53.400000000000006 H779.4 Q778.4 53.400000000000006 776.1999999999999 54.800000000000004Z" fill="none" stroke="#d3d3d3" stroke-width="1.1" stroke-linejoin="round"/><path d="M779.4 46.6 V53.400000000000006 M782.8 46.6 V53.400000000000006" stroke="#d3d3d3" stroke-width="0.8800000000000001"/><path d="M782.4 54 L789.2 60.8 M789.2 54 L782.4 60.8" stroke="#cdcdcd" stroke-width="1.9"/></svg>
<svg style="left:768px;top:74px" width="24" height="18" viewBox="768 74 24 18"><path d="M770.4 83.39999999999999 H776.0" stroke="#4f545e" stroke-width="1.35"/><path d="M776.1999999999999 78.6 Q778.4 80.0 779.4 80.0 H782.8 L785.4 77.39999999999999 V89.39999999999999 L782.8 86.8 H779.4 Q778.4 86.8 776.1999999999999 88.19999999999999Z" fill="none" stroke="#4f545e" stroke-width="1.35" stroke-linejoin="round"/><path d="M779.4 80.0 V86.8 M782.8 80.0 V86.8" stroke="#4f545e" stroke-width="1.08"/></svg>
<svg style="left:770px;top:104px" width="21" height="20" viewBox="770 104 21 20"><path d="M773.6 107.6 L786.6 120.2 M786.6 107.6 L773.6 120.2" stroke="#d93a3a" stroke-width="4.4" stroke-linecap="round"/><path d="M773.6 107.6 L786.6 120.2 M786.6 107.6 L773.6 120.2" stroke="#f0605e" stroke-width="2.4" stroke-linecap="round"/></svg>
<svg style="left:807px;top:40px" width="22" height="25" viewBox="807 40 22 25"><path d="M813.6 54.4 Q810.2 52 810.2 48.8 A6.9 6.9 0 0 1 824 48.8 Q824 52 820.6 54.4 V58.2 H813.6Z" fill="url(#gbulb)" stroke="#5d9be6" stroke-width="1.3"/><path d="M814 57.6 H820.2 V60.4 Q820.2 61.6 817.1 62 Q814 61.6 814 60.4Z" fill="#e9eaee" stroke="#747984" stroke-width="1.1"/></svg>
<svg style="left:850px;top:41px" width="25" height="22" viewBox="850 41 25 22"><path d="M853 53 L857.6 49 H864.5 V60.4 H857.6 L853 58.6Z M861.4 49 L867 45.5 M864.5 52 L871.6 48.8 V56.4 L864.5 60.4" fill="#e4e6ea" stroke="#5f646e" stroke-width="1.2" stroke-linejoin="round"/><rect x="857.6" y="52.3" width="6.9" height="8.1" fill="#eef0f3" stroke="#5f646e" stroke-width="1.2"/><circle cx="868" cy="46.8" r="3.7" fill="#f59a1e"/><circle cx="868" cy="46.8" r="1.5" fill="#fff3d0"/><path d="M868 42 V43.4 M868 50.2 V51.6 M863.2 46.8 H864.6 M871.4 46.8 H872.8 M864.6 43.4 L865.6 44.4 M870.4 49.2 L871.4 50.2 M871.4 43.4 L870.4 44.4 M864.6 50.2 L865.6 49.2" stroke="#f59a1e" stroke-width="1.2"/></svg>
<svg style="left:806px;top:72px" width="24" height="22" viewBox="806 72 24 22"><path d="M827.8 75.2 L820.5 83.5" stroke="#e0852e" stroke-width="3.4" stroke-linecap="round"/><path d="M826.8 75 L821 81.6" stroke="#f7c58c" stroke-width="1"/><path d="M821.8 81.8 L818.6 85.6" stroke="#f0f0f3" stroke-width="3.6"/><path d="M822.4 82.6 L818.6 87" stroke="#9a9da5" stroke-width=".8"/><path d="M819.2 84 Q815 86 812.5 89 Q810.5 91 807.8 91.6 Q814.5 92.4 819 90 Q822.3 88 821.6 86Z" fill="#9a5a2a" stroke="#6e3c16" stroke-width=".7"/></svg>
<svg style="left:850px;top:73px" width="25" height="22" viewBox="850 73 25 22"><path d="M852.2 75.9 H872.5" stroke="#8a8f99" stroke-width="1.5"/><path d="M852.2 80.6 H872.5" stroke="#3b4049" stroke-width="2.5"/><path d="M852.2 85.3 H872.5" stroke="#7a7f89" stroke-width="1.5" stroke-dasharray="2 1.2"/><path d="M866.3 84.6 H869.9 V88.3 H872.4 L868.1 92.9 L863.8 88.3 H866.3Z" fill="#2f86e2"/></svg>
<svg style="left:806px;top:102px" width="24" height="24" viewBox="806 102 24 24"><path d="M807.8 105.8 L811 103.6 L828 114 V122 L824.4 124.2 L807.8 113.8Z" fill="#eef0f3" stroke="#4f545e" stroke-width="1.2" stroke-linejoin="round"/><path d="M812.6 107.8 L824.2 114.8 V121.2 L812.6 114Z" fill="#4f9dea" stroke="#2f78c8" stroke-width=".9"/><path d="M813.4 110.6 L823.4 116.6" stroke="#b9dbf6" stroke-width="1.2"/><path d="M811 103.6 V111.8 L807.8 113.8 M811 111.8 L828 122 M824.4 124.2 V116.2 L828 114 M824.4 116.2 L807.8 105.8" fill="none" stroke="#4f545e" stroke-width="1"/></svg>
<svg style="left:888px;top:46px" width="42" height="27" viewBox="888 46 42 27"><path d="M894 53.8 H924.5" stroke="#4b505a" stroke-width="1.8"/><path d="M890.6 53.8 L896.2 49.3 V58.3Z M927.8 53.8 L922.2 49.3 V58.3Z" fill="#3e4450"/><rect x="891" y="63" width="36.6" height="7.2" rx="1.2" fill="#eab923" stroke="#b7881a" stroke-width="1.1"/><path d="M893.5 65.5 H925" stroke="#f8e08a" stroke-width="2" stroke-dasharray="1.6 1"/></svg>
<svg style="left:888px;top:84px" width="42" height="41" viewBox="888 84 42 41"><path d="M898.6 115.4 L920.8 93.6" stroke="#4b505a" stroke-width="1.7"/><path d="M917 85.6 L928.7 97.1 M890.6 112.2 L901.9 123.5" stroke="#5a5f69" stroke-width="1.5"/><path d="M922.7 91.7 L920.9 98.4 L916.2 93.7Z M896.6 117.4 L898.6 110.6 L903.2 115.3Z" fill="#3e4450"/></svg>
<svg style="left:960px;top:40px" width="42" height="41" viewBox="960 40 42 41"><path d="M967.4 41.6 H962.4 V79 H967.4 M994.3 41.6 H999.3 V79 H994.3" fill="none" stroke="#666b75" stroke-width="1.6"/><path d="M983 62.47 L985.97 59.5 H996.5 V70.03 L993.53 73.0 H983Z" fill="#e3e5ea" stroke="#7d828c" stroke-width="1.3" stroke-linejoin="round"/><path d="M983 62.47 H993.53 V73.0 M993.53 62.47 L996.5 59.5" fill="none" stroke="#7d828c" stroke-width="1"/><path d="M983.7 62.269999999999996 L986.27 60.2 H995.5 L993.23 62.269999999999996Z" fill="#fdfdfd"/><path d="M994.13 62.769999999999996 L995.9 60.7 V69.73 L994.13 72.2Z" fill="#cfd2d9"/><path d="M967.6 62.8 L970.9 59.5 H982.6 V71.2 L979.3000000000001 74.5 H967.6Z" fill="#e3e5ea" stroke="#7d828c" stroke-width="1.3" stroke-linejoin="round"/><path d="M967.6 62.8 H979.3000000000001 V74.5 M979.3000000000001 62.8 L982.6 59.5" fill="none" stroke="#7d828c" stroke-width="1"/><path d="M968.3000000000001 62.599999999999994 L971.1999999999999 60.2 H981.6 L979.0000000000001 62.599999999999994Z" fill="#fdfdfd"/><path d="M979.9000000000001 63.099999999999994 L982.0 60.7 V70.9 L979.9000000000001 73.7Z" fill="#cfd2d9"/><path d="M967.6 48.732 L971.032 45.3 H983.2 V57.467999999999996 L979.768 60.9 H967.6Z" fill="#a9d4ea" stroke="#3f8bd8" stroke-width="1.3" stroke-linejoin="round"/><path d="M967.6 48.732 H979.768 V60.9 M979.768 48.732 L983.2 45.3" fill="none" stroke="#3f8bd8" stroke-width="1"/><path d="M968.3000000000001 48.532 L971.332 46.0 H982.2 L979.4680000000001 48.532Z" fill="#c9e6f3"/><path d="M980.368 49.032 L982.6 46.5 V57.168 L980.368 60.1Z" fill="#84bce0"/></svg>
<svg style="left:1008px;top:38px" width="42" height="43" viewBox="1008 38 42 43"><path d="M1015.5 41.6 H1010.5 V79 H1015.5 M1041.8 41.6 H1046.8 V79 H1041.8" fill="none" stroke="#666b75" stroke-width="1.6"/><circle cx="1023.4" cy="55.7" r="8.3" fill="url(#gsph)" stroke="#747984" stroke-width="1.4"/><path d="M1025 59.775999999999996 L1028.476 56.3 H1040.8 V68.624 L1037.3239999999998 72.1 H1025Z" fill="#e3e5ea" stroke="#7d828c" stroke-width="1.3" stroke-linejoin="round"/><path d="M1025 59.775999999999996 H1037.3239999999998 V72.1 M1037.3239999999998 59.775999999999996 L1040.8 56.3" fill="none" stroke="#7d828c" stroke-width="1"/><path d="M1025.7 59.57599999999999 L1028.776 57.0 H1039.8 L1037.024 59.57599999999999Z" fill="#fdfdfd"/><path d="M1037.9239999999998 60.07599999999999 L1040.2 57.5 V68.324 L1037.9239999999998 71.3Z" fill="#cfd2d9"/><path d="M1041.3 40.6 L1042.9 44.3 L1046.6 42.8 L1045.1 46.5 L1048.8 48.1 L1045.1 49.7 L1046.6 53.4 L1042.9 51.9 L1041.3 55.6 L1039.7 51.9 L1036 53.4 L1037.5 49.7 L1033.8 48.1 L1037.5 46.5 L1036 42.8 L1039.7 44.3Z" fill="#e8431c"/><circle cx="1041.3" cy="48.1" r="3.6" fill="#ffc928"/><circle cx="1041.3" cy="48.1" r="1.7" fill="#fff6c9"/></svg>
<svg style="left:959px;top:84px" width="44" height="44" viewBox="959 84 44 44"><path d="M969.5 89.2 Q969.8 86.2 972.4 86.8 L998.6 95.8 Q1001 96.8 1001 99 V112.6 Q1000.6 115 998.4 114.6 L969.5 107Z" fill="#f2f3f5" stroke="#5f646e" stroke-width="1.4" stroke-linejoin="round"/><path d="M965.6 93.2 L994.8 103.2 V119.6 L965.6 110.6Z" fill="#5ba6ea" stroke="#2f78c8" stroke-width="1.2"/><path d="M966.4 95.6 L994 105" stroke="#a9d3f5" stroke-width="1.8" stroke-dasharray="3 2"/><path d="M961.2 100 Q961.4 96.8 964 97.4 L990.2 107 Q992.6 108 992.6 110.4 V123 Q992.2 125.8 989.6 125 L961.2 115.4Z" fill="url(#gw2)" stroke="#4f545e" stroke-width="1.5" stroke-linejoin="round"/></svg>
<svg style="left:1007px;top:84px" width="42" height="42" viewBox="1007 84 42 42"><rect x="1009.7" y="86.2" width="9.3" height="9.3" rx="1" fill="url(#gw2)" stroke="#5f646e" stroke-width="1.4"/><rect x="1037.5" y="86.2" width="9.3" height="9.3" rx="1" fill="#b9daef" stroke="#3f8bd8" stroke-width="1.5"/><path d="M1022 90.4 H1030.5" stroke="#111" stroke-width="1.5"/><path d="M1029.4 87.2 L1034 90.4 L1029.4 93.6Z" fill="#111"/><path d="M1013.3 98.8 V106.6" stroke="#111" stroke-width="1.5"/><path d="M1010.1 105.6 L1013.3 110.6 L1016.5 105.6Z" fill="#111"/><path d="M1022.4 99 L1028.4 105.4" stroke="#111" stroke-width="1.6"/><path d="M1031.4 102.4 L1031.2 108.6 L1025.2 108.2Z" fill="#111"/><rect x="1009.7" y="113.9" width="13.8" height="9.4" rx="1" fill="#b9daef" stroke="#3f8bd8" stroke-width="1.5"/><path d="M1038.5 107.6 L1044.9 114 L1038.5 120.4 L1032.1 114Z" fill="#b9daef" stroke="#3f8bd8" stroke-width="1.5" stroke-linejoin="round"/></svg>
<svg style="left:1073px;top:41px" width="42" height="40" viewBox="1073 41 42 40"><rect x="1096.6" y="44.2" width="10.6" height="26" rx="1" fill="url(#gw)" stroke="#767b85" stroke-width="1.7"/><rect x="1076.4" y="44.2" width="18.2" height="17.8" rx="1" fill="url(#gw)" stroke="#767b85" stroke-width="1.7"/><path d="M1076.4 65.8 H1096.6 V70.2 H1107.2 V75.2 H1076.4Z" fill="url(#gw2)" stroke="#767b85" stroke-width="1.7" stroke-linejoin="round"/><path d="M1094.40 78.20 L1099.97 76.84 L1096.14 72.74Z" fill="#f5f0e6" stroke="#8a8072" stroke-width=".7"/><path d="M1094.40 78.20 L1096.05 77.62 L1095.09 76.60Z" fill="#444"/><path d="M1099.97 76.84 L1111.97 65.63 L1108.15 61.54 L1096.14 72.74Z" fill="url(#gpen)" stroke="#a87800" stroke-width=".7"/><path d="M1098.06 74.79 L1110.06 63.58" stroke="#fff3b0" stroke-width="1.2"/><path d="M1111.97 65.63 L1114.31 63.45 L1110.49 59.35 L1108.15 61.54Z" fill="#b5622a" stroke="#8a4516" stroke-width=".7"/></svg>
<svg style="left:1140px;top:39px" width="44" height="43" viewBox="1140 39 44 43"><path d="M1142.8 42 Q1158 44.6 1176.8 42 V68.6 Q1166 69.8 1158.2 73 Q1150 71.6 1142.8 67.4Z" fill="#e4e4e4" stroke="#d2d2d2" stroke-width="1.3"/><path d="M1158.2 47.8 L1176.8 42 M1158.2 47.8 V73 M1142.8 42 Q1150 45.6 1158.2 47.8" fill="none" stroke="#cfcfcf" stroke-width="1.2"/><path d="M1158.8 48.2 L1176.2 42.8 V68.2 Q1166 69.4 1158.8 72.2Z" fill="#dadada"/><path d="M1169.6 69.6 Q1166.4 67.2 1166.4 64 A6.8 6.8 0 0 1 1180 64 Q1180 67.2 1176.8 69.6 V73.4 H1169.6Z" fill="#efefef" stroke="#d6d6d6" stroke-width="1.2"/><path d="M1170.4 73.4 H1176 V77 Q1176 78.6 1173.2 79 Q1170.4 78.6 1170.4 77Z" fill="#ededed" stroke="#d3d3d3" stroke-width="1.1"/></svg>
<svg style="left:1192px;top:39px" width="44" height="42" viewBox="1192 39 44 42"><path d="M1195.4 42 H1232.4 V69.6 L1223.4 78 Q1206 76 1195.4 68Z" fill="#ededed" stroke="#d2d2d2" stroke-width="1.3" stroke-linejoin="round"/><path d="M1195.4 42 Q1206 50.6 1223.4 52.4 L1232.4 42 M1223.4 52.4 V78" fill="none" stroke="#d2d2d2" stroke-width="1.2"/><path d="M1195.4 55.4 Q1206 63.6 1223.4 65.4 L1232.4 56 M1195.4 56.4 H1232.4" fill="none" stroke="#d8d8d8" stroke-width="1.1"/><path d="M1195.8 56.6 H1232 L1223.4 65 Q1206 63 1195.8 56.6Z" fill="#e1e1e1"/><path d="M1196 66 Q1210 68 1232 66" fill="none" stroke="#dcdcdc" stroke-width="1"/></svg>
<svg style="left:378px;top:1008px" width="24" height="20" viewBox="378 1008 24 20"><rect x="379.8" y="1010.2" width="19.6" height="15.6" fill="#f4f4f6" stroke="#545964" stroke-width="1.3"/><rect x="379.8" y="1010.2" width="19.6" height="2.6" fill="#545964"/><rect x="386" y="1012.6" width="7" height="4.2" fill="#6a6f79"/><rect x="381" y="1016.6" width="5" height="4.2" fill="#8a8f99"/><rect x="393" y="1016.6" width="5.4" height="4.2" fill="#8a8f99"/><rect x="386" y="1020.6" width="7" height="4.2" fill="#6a6f79"/></svg>
<svg style="left:404px;top:1008px" width="24" height="20" viewBox="404 1008 24 20"><path d="M406 1015.6 L411 1011 H424.2 V1021 L419.4 1025.8 H406Z" fill="#cfe4f6" stroke="#2f78c8" stroke-width="1.4" stroke-linejoin="round"/><path d="M406 1015.6 H419.4 L424.2 1011 M419.4 1015.6 V1025.8" fill="none" stroke="#2f78c8" stroke-width="1.2"/><rect x="408" y="1017.6" width="9.4" height="3" fill="#d84848"/><rect x="408" y="1020.8" width="9.4" height="3" fill="#4cae4c"/></svg>
<svg style="left:428px;top:1006px" width="26" height="22" viewBox="428 1006 26 22"><path d="M439.5 1008 L441 1011.4 L444.6 1010 L443.8 1013.6 L447.4 1015 L444.2 1016.8 L445.6 1020.2 L442 1019.6 L440.6 1023 L438.4 1020 L435 1021.6 L435.2 1018 L431.6 1017.2 L434 1014.6 L431.8 1011.8 L435.4 1011.6 L435.8 1008.2 L438.6 1010.4Z" fill="#d9a12a"/><circle cx="439.3" cy="1015.6" r="4.6" fill="url(#gsun)"/><path d="M443 1018.6 L450 1025.6 M450 1018.6 L443 1025.6" stroke="#d63a35" stroke-width="2.3"/></svg>
<svg style="left:458px;top:1008px" width="22" height="20" viewBox="458 1008 22 20"><circle cx="467.5" cy="1016.2" r="5.6" fill="url(#gbulb)" stroke="#4c96ee" stroke-width="1.5"/><path d="M461.5 1025.6 H471" stroke="#3b4049" stroke-width="1.8"/><path d="M466 1022 V1025" stroke="#8a8f99" stroke-width="1.2"/><path d="M470.4 1018.8 L477.4 1025.8 M477.4 1018.8 L470.4 1025.8" stroke="#d63a35" stroke-width="2.3"/></svg>
<svg style="left:482px;top:1008px" width="24" height="20" viewBox="482 1008 24 20"><path d="M484.4 1014 L487.6 1017.4 Q489 1022.6 492 1023.8 H499 Q502.6 1021.6 502.4 1016.4 Q501.4 1013.4 497.6 1013.2 H489.6 L488.2 1015 Z" fill="#f0f1f3" stroke="#6a6f79" stroke-width="1.1" stroke-linejoin="round"/><path d="M492.4 1012.8 Q494 1010.2 496.4 1012.8" fill="none" stroke="#6a6f79" stroke-width="1.2"/><circle cx="499.8" cy="1018.6" r="4.3" fill="#ffffff" stroke="#4c96ee" stroke-width="2"/><path d="M498.2 1023.2 H501.40000000000003 V1025.6 H498.2Z" fill="#dfe2e8" stroke="#7a7f89" stroke-width=".8"/></svg>
<svg style="left:509px;top:1008px" width="24" height="20" viewBox="509 1008 24 20"><path d="M515.4 1025.4 V1015.4 H527.4 V1025.4" fill="none" stroke="#3f86cf" stroke-width="3"/><path d="M511 1020.4 H515" stroke="#6a6f79" stroke-width="1.4"/><path d="M520.6 1012 V1015" stroke="#6a6f79" stroke-width="1.4"/><path d="M522.2 1018 L529.4000000000001 1025.2 M529.4000000000001 1018 L522.2 1025.2" stroke="#d63a35" stroke-width="2.3"/></svg>
<svg style="left:535px;top:1008px" width="24" height="20" viewBox="535 1008 24 20"><path d="M541.4 1025.4 V1015.4 H552.4 V1020" fill="none" stroke="#3f86cf" stroke-width="3"/><path d="M537 1020.4 H541" stroke="#6a6f79" stroke-width="1.4"/><path d="M546.6 1012 V1015" stroke="#6a6f79" stroke-width="1.4"/><rect x="544.4" y="1019.6" width="3.4" height="2.4" fill="#d84848"/><circle cx="553.4" cy="1018.4" r="4.3" fill="#ffffff" stroke="#4c96ee" stroke-width="2"/><path d="M551.8 1023.0 H555.0 V1025.4 H551.8Z" fill="#dfe2e8" stroke="#7a7f89" stroke-width=".8"/></svg>
<svg style="left:562px;top:1007px" width="24" height="22" viewBox="562 1007 24 22"><path d="M564.6 1016.6 L574.4 1009 L583.4 1014.4 V1016.4 L581.6 1016 V1024 L571.6 1026.6 L566.4 1023.6 V1016.8Z" fill="#eef0f4" stroke="#596273" stroke-width="1.4" stroke-linejoin="round"/><path d="M566.4 1017 L571.6 1019.6 L581.6 1016 M571.6 1019.6 V1026.4" fill="none" stroke="#596273" stroke-width="1.1"/><path d="M567 1018 L571 1020 V1026 L567 1023.4Z" fill="#7d8697"/><rect x="574.8" y="1020.2" width="7.6" height="6" fill="#3d9a7d" stroke="#2a7a60" stroke-width=".8"/><path d="M576.6 1020 V1018.4 Q576.6 1016.4 578.6 1016.4 Q580.6 1016.4 580.6 1018" fill="none" stroke="#3d9a7d" stroke-width="1.4"/><rect x="576.4" y="1022.4" width="4.4" height="1.8" fill="#cfeee2"/></svg>
<svg style="left:588px;top:1008px" width="25" height="20" viewBox="588 1008 25 20"><path d="M590.6 1014.4 L597.4 1023.2 M609.6 1012.6 Q606.4 1010.2 603.6 1012.2" fill="none" stroke="#4f545e" stroke-width="1.4"/><path d="M591 1014.6 Q593.5 1011 596.6 1012.6" fill="none" stroke="#4f545e" stroke-width="1.3"/><path d="M596.4 1021.6 Q598 1019 601.8 1019.6 Q604.6 1020.4 603.4 1023 Q601.6 1025.6 598.4 1025 Q596 1024.2 596.4 1021.6Z" fill="#a9d3f0" stroke="#4f545e" stroke-width="1.2"/><path d="M603.6 1018.8 Q605.4 1016.6 608.6 1017.2 Q610.8 1018 609.8 1020.2 Q608.2 1022.4 605.4 1021.8 Q603.4 1021 603.6 1018.8Z" fill="#a9d3f0" stroke="#4f545e" stroke-width="1.2"/><path d="M609.6 1012.6 L610.4 1018" stroke="#4f545e" stroke-width="1.3"/></svg>
<svg style="left:620px;top:1010px" width="14" height="18" viewBox="620 1010 14 18"><circle cx="627" cy="1017.2" r="4.3" fill="#ffffff" stroke="#4c96ee" stroke-width="2"/><path d="M625.4 1021.8000000000001 H628.6 V1024.2 H625.4Z" fill="#dfe2e8" stroke="#7a7f89" stroke-width=".8"/></svg>
<svg style="left:642px;top:1008px" width="23" height="20" viewBox="642 1008 23 20"><rect x="644.8" y="1012.6" width="16.8" height="12.6" rx="1" fill="#e9ebef" stroke="#2b2e35" stroke-width="1.7"/><path d="M646.6 1011.4 V1013 M649.6 1011.4 V1013 M652.6 1011.4 V1013 M655.6 1011.4 V1013 M646.6 1025 V1026.6 M649.6 1025 V1026.6 M652.6 1025 V1026.6" stroke="#2b2e35" stroke-width="1.3"/><circle cx="657.6" cy="1021.6" r="3.6" fill="#4a4f59" stroke="#f0f0f0" stroke-width="1.1"/><path d="M655 1014.6 H660.4 L662 1016.8" fill="none" stroke="#2b2e35" stroke-width="1.3"/></svg>
<svg style="left:668px;top:1007px" width="25" height="21" viewBox="668 1007 25 21"><path d="M670.6 1016.4 L676.6 1011.4 H684.6 L681 1016.4Z" fill="#f0f1f3" stroke="#555a64" stroke-width="1.1"/><path d="M670.8 1016.6 H681.4 V1026.2 H670.8Z" fill="#dfe1e6" stroke="#555a64" stroke-width="1.1"/><path d="M673.4 1016.8 V1026 M676 1016.8 V1026 M678.6 1016.8 V1026" stroke="#555a64" stroke-width=".9"/><path d="M672.4 1020.4 H674.8 M677 1020.4 H679.6 M673.6 1020.4 V1025.6 M678.2 1020.4 V1025.6" stroke="#d63a35" stroke-width="1.6"/><circle cx="685.8" cy="1016.8" r="4.3" fill="#ffffff" stroke="#4c96ee" stroke-width="2"/><path d="M684.1999999999999 1021.4 H687.4 V1023.8 H684.1999999999999Z" fill="#dfe2e8" stroke="#7a7f89" stroke-width=".8"/></svg>
<svg style="left:695px;top:1007px" width="24" height="21" viewBox="695 1007 24 21"><path d="M702.6 1011 H713.6 L709.4 1015.4 H698.6Z" fill="#d9dbe0" stroke="#50555f" stroke-width="1.1"/><path d="M698 1017.4 L702 1015 H712.4 L716.6 1012.4 V1021.4 L712.4 1025.8 H698Z" fill="#e6e8ec" stroke="#50555f" stroke-width="1.3" stroke-linejoin="round"/><rect x="701.6" y="1017.6" width="8.4" height="8.2" fill="#f3f4f6" stroke="#50555f" stroke-width="1.2"/><path d="M703 1020.4 H708.6 M703 1022.8 H708.6" stroke="#8a8f99" stroke-width=".9"/><path d="M712.6 1016.4 L716.2 1013.6 V1021 L712.6 1024.6Z" fill="#9fa3ac"/></svg>
<svg style="left:721px;top:1007px" width="24" height="21" viewBox="721 1007 24 21"><path d="M723.6 1010 V1026.4 M742.2 1010 V1017" stroke="#3e4450" stroke-width="1.4"/><path d="M724.6 1012.8 H741.4" stroke="#3e4450" stroke-width="1.2"/><path d="M724 1012.8 L727.4 1011 V1014.6Z M742 1012.8 L738.6 1011 V1014.6Z" fill="#3e4450"/><path d="M725 1023 H734" stroke="#8a8f99" stroke-width="1" stroke-dasharray="1.6 1.2"/><rect x="734.6" y="1020.2" width="7.8" height="6.2" rx="1" fill="#6a6f79"/><path d="M736.2 1020.2 V1018.8 Q736.2 1016.8 738.5 1016.8 Q740.8 1016.8 740.8 1018.8 V1020.2" fill="none" stroke="#6a6f79" stroke-width="1.5"/><path d="M736.2 1023.2 H740.8" stroke="#c5c8cf" stroke-width="1.2"/></svg>
<svg style="left:566px;top:1036px" width="25" height="23" viewBox="566 1036 25 23"><path d="M573 1040.48 L578.5 1037.4 L584 1040.48 V1046.5520000000001 L578.5 1048.4 L573 1046.5520000000001Z" fill="#f2f8ec" stroke="#3f8f2f" stroke-width="1.2" stroke-linejoin="round"/><path d="M573.5 1040.48 L578.5 1037.9 L583.5 1040.48 L578.5 1043.5600000000002Z" fill="#dff1d0"/><path d="M578.5 1043.5600000000002 L583.4 1040.78 V1046.2520000000002 L578.5 1047.8000000000002Z" fill="#7cb45a"/><path d="M573 1040.48 L578.5 1043.5600000000002 L584 1040.48 M578.5 1043.5600000000002 V1048.4" fill="none" stroke="#3f8f2f" stroke-width="1"/><path d="M567.8 1047.9599999999998 L573.8 1044.6 L579.8 1047.9599999999998 V1054.5839999999998 L573.8 1056.6 L567.8 1054.5839999999998Z" fill="#f3f8fd" stroke="#2f6fc8" stroke-width="1.2" stroke-linejoin="round"/><path d="M568.3 1047.9599999999998 L573.8 1045.1 L579.3 1047.9599999999998 L573.8 1051.32Z" fill="#d4e8fb"/><path d="M573.8 1051.32 L579.1999999999999 1048.2599999999998 V1054.2839999999999 L573.8 1056.0Z" fill="#5a9be6"/><path d="M567.8 1047.9599999999998 L573.8 1051.32 L579.8 1047.9599999999998 M573.8 1051.32 V1056.6" fill="none" stroke="#2f6fc8" stroke-width="1"/><path d="M583 1043.4 Q581.4 1045.2 582.2 1047.2 Q582.8 1048.6 584.2 1049.2 V1056 Q584.3 1057.2 585.3 1057.2 Q586.3 1057.2 586.4 1056 V1049.2 Q587.8 1048.6 588.4 1047.2 Q589.2 1045.2 587.6 1043.4 V1046.6 L585.3 1047.6 L583 1046.6Z" fill="#d7dae2" stroke="#5c6680" stroke-width="1"/></svg>
<svg style="left:856px;top:1036px" width="21" height="23" viewBox="856 1036 21 23"><path d="M862.6 1038.6 H873.6 Q874.6 1038.6 874.6 1039.6 V1045 Q874.6 1046 873.6 1046 H867.6 L864.6 1048.6 V1046 H862.6Z" fill="#c0c0c0" stroke="#b0b0b0" stroke-width="1"/><circle cx="862.4" cy="1049.6" r="2.3" fill="#b3b3b3"/><path d="M857.6 1057 Q858 1052.4 862.4 1052.4 Q866.8 1052.4 867.2 1057Z" fill="#b3b3b3"/></svg>
<svg style="left:903px;top:1036px" width="24" height="23" viewBox="903 1036 24 23"><rect x="905.6" y="1038.4" width="18.8" height="18.2" rx="1.5" fill="#f7f8fa" stroke="#394050" stroke-width="1.6"/><rect x="905.6" y="1038.4" width="18.8" height="2.8" fill="#394050"/><circle cx="909.2" cy="1044.6" r="1.7" fill="#b9bcc6" stroke="#596073" stroke-width=".8"/><path d="M912.6 1044.8 H921.6" stroke="#8a8f99" stroke-width="1.5"/><path d="M911.2 1048.4 H913.4 V1050.2 H911.2Z M911.2 1052.4 H913.4 V1054.2 H911.2Z" fill="#2b2e35"/><path d="M915 1049.4 H921.6 M915 1053.4 H921.6" stroke="#3e4450" stroke-width="1.3"/></svg>
<svg style="left:931px;top:1036px" width="22" height="22" viewBox="931 1036 22 22"><rect x="936" y="1038" width="15.4" height="16.8" fill="#a6a6a6"/><path d="M932.4 1050.6 H940" stroke="#c9c9c9" stroke-width="2.4"/><path d="M938 1046.4 L943 1050.6 L938 1054.8" fill="none" stroke="#c9c9c9" stroke-width="2"/><path d="M934.4 1038.4 H938" stroke="#b9b9b9" stroke-width="1.4"/></svg>
<svg style="left:1489px;top:1036px" width="24" height="23" viewBox="1489 1036 24 23"><rect x="1491" y="1039.4" width="9.4" height="6.4" rx="3.2" fill="none" stroke="#d9a91e" stroke-width="2.2"/><rect x="1500.6" y="1039.4" width="9.4" height="6.4" rx="3.2" fill="none" stroke="#d9a91e" stroke-width="2.2"/><path d="M1498 1042.6 H1503" stroke="#b58512" stroke-width="1.6"/><path d="M1498.6 1043.4 L1498.6 1055.2 L1501.3 1052.8 L1503.5 1057.3 L1505.7 1056.3 L1503.5 1052.0 L1507.2 1051.8Z" fill="#f3f4f6" stroke="#3e4450" stroke-width="1" stroke-linejoin="round"/></svg>
<svg style="left:1517px;top:1036px" width="24" height="23" viewBox="1517 1036 24 23"><path d="M1519 1047.6 L1529 1040 V1047.6Z" fill="#d9eaf8"/><path d="M1519 1047.6 L1529 1040 M1519 1047.6 H1530 M1520.6 1053.2 H1530 M1519 1053.2 L1524 1049.6" fill="none" stroke="#2f78c8" stroke-width="1.3"/><path d="M1531 1038 L1537.6 1044.6 M1537.6 1038 L1531 1044.6" stroke="#d63a35" stroke-width="2.3"/><path d="M1530.6 1044.4 L1530.6 1055.2 L1533.1 1053.0 L1535.1 1057.2 L1537.1 1056.3 L1535.1 1052.3 L1538.5 1052.1Z" fill="#f3f4f6" stroke="#3e4450" stroke-width="1" stroke-linejoin="round"/></svg>
<svg style="left:1545px;top:1036px" width="24" height="23" viewBox="1545 1036 24 23"><path d="M1552.8 1050.6 V1057" stroke="#6a6f79" stroke-width="1.1"/><path d="M1549 1038.4 H1557 Q1557.8 1038.4 1557.6 1039.2 L1556.6 1041.2 V1044.4 Q1558.6 1045.6 1559 1048.6 Q1559 1049.8 1558 1049.8 H1548 Q1547 1049.8 1547 1048.6 Q1547.4 1045.6 1549.4 1044.4 V1041.2 L1548.4 1039.2 Q1548.2 1038.4 1549 1038.4Z" fill="url(#gpin)" stroke="#d46a12" stroke-width="1"/><path d="M1549.6 1042.2 H1556.4 M1548.6 1046.8 H1557.4" stroke="#fff0d6" stroke-width="1.2"/><path d="M1558.4 1043.6 L1558.4 1055.0 L1561.1 1052.7 L1563.2 1057.1 L1565.2 1056.1 L1563.2 1052.0 L1566.8 1051.8Z" fill="#f3f4f6" stroke="#3e4450" stroke-width="1" stroke-linejoin="round"/></svg>
<svg style="left:1573px;top:1036px" width="24" height="23" viewBox="1573 1036 24 23"><path d="M1576 1042 Q1580 1039.6 1584.6 1039.4 V1054.4 Q1580 1054.6 1576 1056.6Z" fill="#bcdcf4" stroke="#2f78c8" stroke-width="1.4" stroke-linejoin="round"/><path d="M1587 1038 L1593.6 1044.6 M1593.6 1038 L1587 1044.6" stroke="#d63a35" stroke-width="2.3"/><path d="M1585.6 1044.4 L1585.6 1055.2 L1588.1 1053.0 L1590.1 1057.2 L1592.1 1056.3 L1590.1 1052.3 L1593.5 1052.1Z" fill="#f3f4f6" stroke="#3e4450" stroke-width="1" stroke-linejoin="round"/></svg>
<svg style="left:1600px;top:1036px" width="25" height="23" viewBox="1600 1036 25 23"><path d="M1608 1038.6 V1049 M1602.8 1043.8 H1613.2" stroke="#22252b" stroke-width="1.3"/><path d="M1608 1037.2 L1610 1040 H1606Z M1608 1050.4 L1610 1047.6 H1606Z M1601.4 1043.8 L1604.2 1041.8 V1045.8Z M1614.6 1043.8 L1611.8 1041.8 V1045.8Z" fill="#22252b"/><path d="M1614.6 1038 L1621.1999999999998 1044.6 M1621.1999999999998 1038 L1614.6 1044.6" stroke="#d63a35" stroke-width="2.3"/><path d="M1613.6 1045.0 L1613.6 1055.2 L1616.0 1053.2 L1617.8 1057.1 L1619.7 1056.2 L1617.8 1052.5 L1621.1 1052.3Z" fill="#f3f4f6" stroke="#3e4450" stroke-width="1" stroke-linejoin="round"/></svg>
<svg style="left:1630px;top:1037px" width="20" height="21" viewBox="1630 1037 20 21"><circle cx="1639.8" cy="1047.4" r="6.6" fill="none" stroke="#b2b2b2" stroke-width="2.6" stroke-dasharray="2.2 1.9"/></svg>
<svg style="left:1653px;top:1037px" width="24" height="21" viewBox="1653 1037 24 21"><path d="M1655.6 1039.6 H1674.8 L1667.6 1048.4 V1056 H1662.8 V1048.4Z" fill="#d9dce2" stroke="#6a6f79" stroke-width="1.4" stroke-linejoin="round"/><path d="M1658.6 1041.2 H1671.8" stroke="#f3f4f6" stroke-width="1.4"/></svg>
</div></body></html>
